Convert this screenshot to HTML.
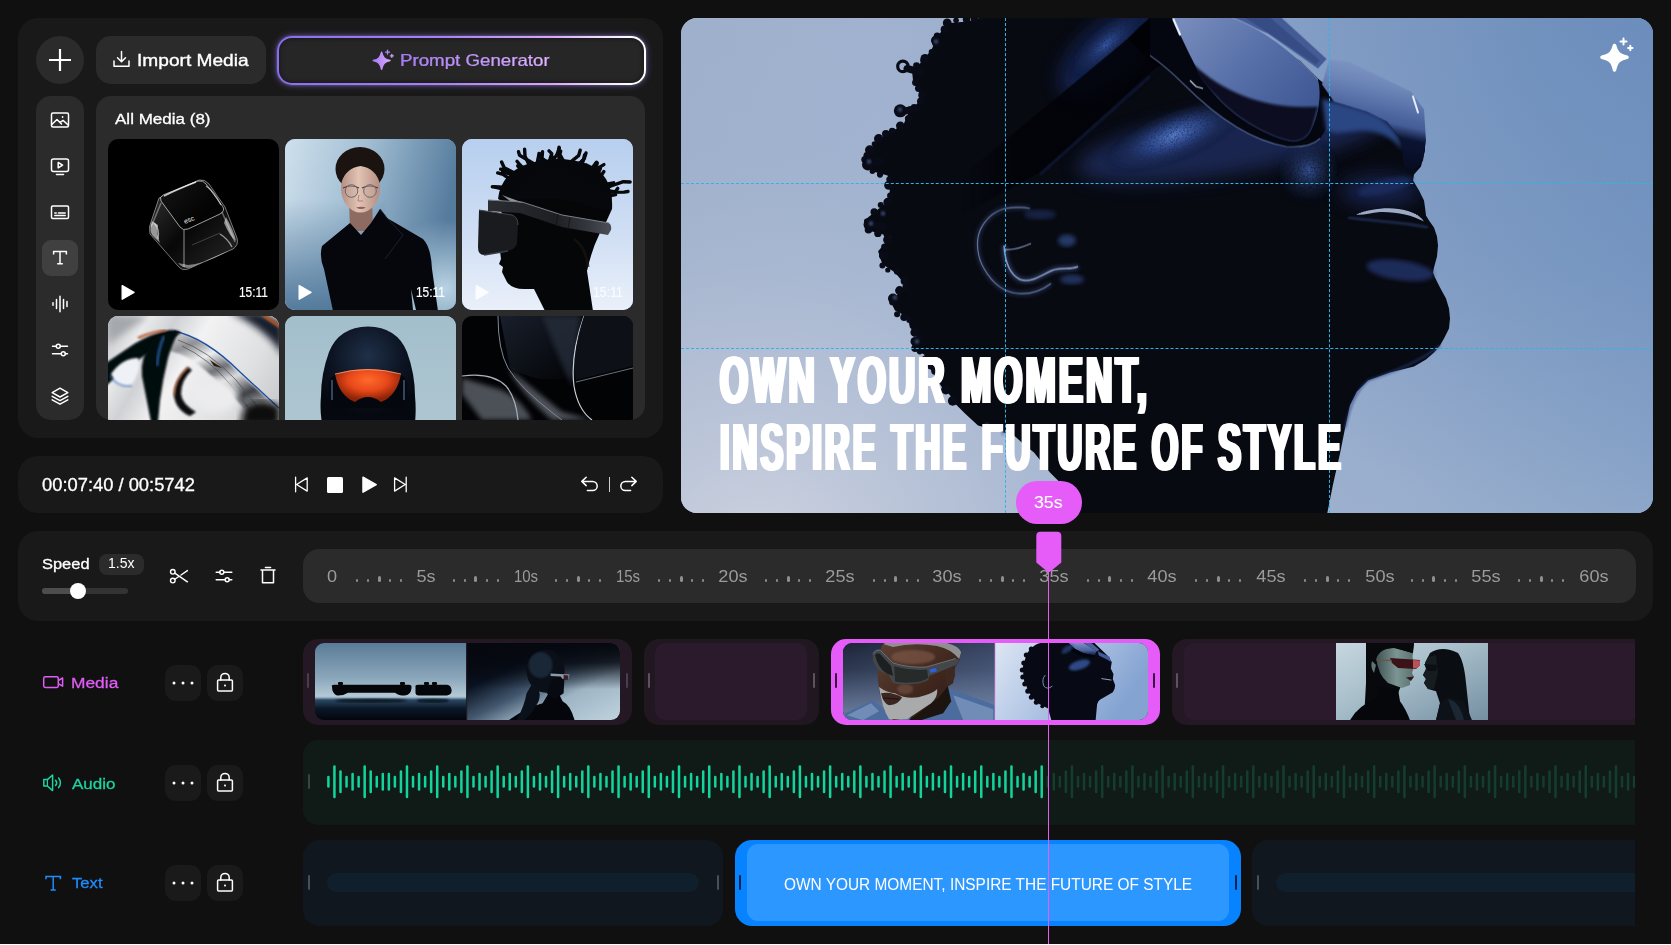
<!DOCTYPE html>
<html lang="en">
<head>
<meta charset="utf-8">
<title>Video Editor</title>
<style>
*{box-sizing:border-box;margin:0;padding:0}
html,body{width:1671px;height:945px;overflow:hidden;background:#101010}
body{font-family:"Liberation Sans",sans-serif;color:#fff;position:relative}
.abs{position:absolute}
.panel{position:absolute;background:#191919;border-radius:20px}
.box{position:absolute;background:#2b2b2b}
.t{position:absolute;white-space:nowrap;transform-origin:0 50%;line-height:1}
svg{position:absolute;overflow:visible}
.ico{fill:none;stroke:#fff;stroke-width:1.5;stroke-linecap:round;stroke-linejoin:round}
.thumb{position:absolute;border-radius:10px;overflow:hidden;width:171px;height:171px}
.thumb svg{left:0;top:0}
.tbtn{position:absolute;width:36px;height:36px;border-radius:11px;background:#1a1a1a}
.hdl{position:absolute;width:2px;height:15px;border-radius:1px}
</style>
</head>
<body>
<!-- LEFT MEDIA PANEL -->
<div class="panel" style="left:18px;top:18px;width:645px;height:420px"></div>
<div class="box" style="left:36px;top:36px;width:48px;height:48px;border-radius:24px"></div>
<svg style="left:36px;top:36px" width="48" height="48"><path class="ico" style="stroke-width:2.2;stroke-linecap:butt" d="M13 24H35M24 13V35"/></svg>
<div class="box" style="left:96px;top:36px;width:169.5px;height:48px;border-radius:15px"></div>
<svg style="left:112px;top:50px" width="20" height="20"><path class="ico" d="M9.5 1.5V11.5M5.5 7.8L9.5 11.8L13.5 7.8M2 11V16.2H17V11"/></svg>
<div class="t" id="tImport" style="left:137.1px;top:52.0px;font-size:16.5px;font-weight:400;-webkit-text-stroke:0.35px #fff;transform:scaleX(1.159)">Import Media</div>

<!-- prompt generator -->
<div class="abs" style="left:277px;top:35.5px;width:368.5px;height:49px;border-radius:15px;background:linear-gradient(90deg,#8a6df2 0%,#a882f5 45%,#d8a8f7 75%,#ffffff 96%);box-shadow:0 0 7px rgba(150,120,240,.55), 0 0 3px rgba(255,255,255,.25)"></div>
<div class="abs" style="left:279px;top:37.5px;width:364.5px;height:45px;border-radius:13px;background:#262626;box-shadow:inset 0 0 5px rgba(0,0,0,.5)"></div>
<svg style="left:372px;top:48px" width="24" height="24" viewBox="0 0 24 24">
<defs><linearGradient id="pg" x1="0" x2="1"><stop offset="0" stop-color="#a67cf7"/><stop offset="1" stop-color="#d9a7fb"/></linearGradient></defs>
<path fill="url(#pg)" d="M9.6 4.200000C10.8 9.4 12.6 11.4 18 12.5C12.6 13.800000 10.8 15.800000 9.6 21.400000C8.4 15.800000 6.6 13.800000 1.2 12.5C6.6 11.400000 8.4 9.400000 9.600000 4.200000Z" stroke="url(#pg)" stroke-width="1.4" stroke-linejoin="round"/>
<path stroke="url(#pg)" stroke-width="1.3" stroke-linecap="round" d="M15.5 2.2V6.2M13.5 4.2H17.500001M19.8 6.3V9.3M18.3 7.8H21.300001"/>
</svg>
<div class="t" id="tPrompt" style="left:399.5px;top:52.0px;font-size:16.5px;background:linear-gradient(90deg,#a57bf6,#c99cf8 60%,#e3b8fa);-webkit-background-clip:text;background-clip:text;color:transparent;-webkit-text-stroke:0.2px #b78cf7;transform:scaleX(1.133)">Prompt Generator</div>

<!-- sidebar -->
<div class="box" style="left:36px;top:96px;width:48px;height:324px;border-radius:15px"></div>
<div class="abs" style="left:42px;top:240px;width:36px;height:36px;border-radius:9px;background:#404040"></div>
<!-- image icon -->
<svg style="left:50px;top:110px" width="20" height="20"><rect class="ico" x="1.5" y="3" width="17" height="14" rx="1.5"/><path class="ico" d="M1.8 14.5L7 9.5L11.5 14M10 12.6L13 10.4L18.2 15"/><circle cx="12.6" cy="7" r="0.9" fill="#fff"/></svg>
<!-- video icon -->
<svg style="left:50px;top:156px" width="20" height="20"><rect class="ico" x="1.5" y="3" width="17" height="12.5" rx="2"/><path class="ico" d="M8.2 6.5L12.6 9.2L8.2 11.9Z"/><path class="ico" d="M6.5 18.6H13.5"/></svg>
<!-- subtitles icon -->
<svg style="left:50px;top:202px" width="20" height="20"><rect class="ico" x="1.5" y="4" width="17" height="12.5" rx="1.2"/><path class="ico" d="M4.8 11H6.2M8.4 11H15.2M4.8 13.6H15.2"/></svg>
<!-- T icon -->
<svg style="left:50px;top:248px" width="20" height="20"><path class="ico" style="stroke-linecap:butt" d="M3.6 6.4V3.6H16.4V6.4M10 3.6V15.8M7.2 15.8H12.8"/></svg>
<!-- waveform icon -->
<svg style="left:50px;top:294px" width="20" height="20"><path class="ico" d="M3 8.8V11.2M6.5 5.5V14.5M10 2.2V17.8M13.5 5.5V14.5M17 7.6V12.4"/></svg>
<!-- sliders icon -->
<svg style="left:50px;top:340px" width="20" height="20"><path class="ico" d="M2.5 6.3H6.3M10.3 6.3H17.5M2.5 13.7H11.3M15.3 13.7H17.5"/><circle class="ico" cx="8.3" cy="6.3" r="2"/><circle class="ico" cx="13.3" cy="13.7" r="2"/></svg>
<!-- layers icon -->
<svg style="left:50px;top:386px" width="20" height="20"><path class="ico" d="M10 2.2L17.8 6.6L10 11L2.2 6.6Z"/><path class="ico" d="M2.2 10.3L10 14.7L17.8 10.3M2.2 13.8L10 18.2L17.8 13.8"/></svg>

<!-- media list -->
<div class="box" style="left:96px;top:96px;width:549px;height:324px;border-radius:15px"></div>
<div class="t" id="tAll" style="left:115.2px;top:111.3px;font-size:15.5px;-webkit-text-stroke:0.3px #fff;transform:scaleX(1.098)">All Media (8)</div>
<div class="abs" id="mediaClip" style="left:96px;top:96px;width:549px;height:324px;overflow:hidden;border-radius:15px">
<!--TH_S--><!-- thumb 1 : glass keycap -->
<div class="thumb" style="left:12px;top:43.4px;background:#000">
<svg width="171" height="171" viewBox="0 0 171 171">
<defs><linearGradient id="kc1" x1="0" y1="0" x2="1" y2="1"><stop offset="0" stop-color="#fff" stop-opacity=".22"/><stop offset=".5" stop-color="#fff" stop-opacity=".03"/><stop offset="1" stop-color="#fff" stop-opacity=".16"/></linearGradient></defs>
<path d="M51,59 L91,41 Q97,40 101,45 L117,68 L129,99 Q131,106 125,110 L80,130 Q74,132 70,127 L42,95 Q40,88 44,80Z" fill="url(#kc1)" stroke="#fff" stroke-opacity=".45" stroke-width="1"/>
<path d="M53,62 Q51,58 55,56 L90,42 Q95,41 98,45 L115,68 Q117,72 112,75 L80,90 Q75,92 72,88Z" fill="#000" fill-opacity=".55" stroke="#fff" stroke-opacity=".6" stroke-width="1"/>
<path d="M76,91 L76,128 M114,73 L127,103 M53,64 L43,88" stroke="#fff" stroke-opacity=".35" stroke-width="1.6" fill="none"/>
<path d="M46,84 Q52,90 50,100 M112,95 Q120,100 124,108 M98,47 Q106,52 113,66" stroke="#fff" stroke-opacity=".55" stroke-width="1.4" fill="none"/>
<path d="M84,106 L112,94" stroke="#fff" stroke-opacity=".2" stroke-width="1"/>
<path d="M44,82 Q41,90 44,96 L52,104 Q48,94 50,86Z" fill="#fff" fill-opacity=".55"/>
<path d="M118,78 Q126,92 128,102 Q122,98 116,84Z" fill="#fff" fill-opacity=".5"/>
<path d="M70,124 Q76,131 84,128 L120,112 Q100,124 80,126Z" fill="#fff" fill-opacity=".45"/>
<path d="M56,57 Q70,50 88,43" stroke="#fff" stroke-opacity=".7" stroke-width="1.6" fill="none"/>
<text x="77" y="85" font-family="Liberation Sans, sans-serif" font-size="7" fill="#fff" fill-opacity=".9" transform="rotate(-22 77 85)">esc</text>
</svg></div>
<!-- thumb 2 : woman -->
<div class="thumb" style="left:189px;top:43.4px;background:#8fb0c8">
<svg width="171" height="171" viewBox="0 0 171 171">
<defs>
<linearGradient id="w1" x1="0" y1="0" x2="1" y2="0.25"><stop offset="0" stop-color="#cfe0ec"/><stop offset=".45" stop-color="#a3bfd4"/><stop offset="1" stop-color="#557b9d"/></linearGradient>
<linearGradient id="w2" x1="0" y1="0" x2="0" y2="1"><stop offset=".35" stop-color="#4f7699" stop-opacity="0"/><stop offset="1" stop-color="#4f7699" stop-opacity=".95"/></linearGradient>
<radialGradient id="w3" cx="160" cy="150" r="70" gradientUnits="userSpaceOnUse"><stop offset="0" stop-color="#b9d3e3"/><stop offset="1" stop-color="#b9d3e3" stop-opacity="0"/></radialGradient>
<linearGradient id="skin" x1="0" y1="0" x2="1" y2="0"><stop offset="0" stop-color="#b48f82"/><stop offset=".45" stop-color="#e2c3b4"/><stop offset="1" stop-color="#b58f80"/></linearGradient>
</defs>
<rect width="171" height="171" fill="url(#w1)"/><rect width="100" height="171" fill="url(#w2)"/><rect width="171" height="171" fill="url(#w3)"/>
<ellipse cx="75" cy="30" rx="24.5" ry="22" fill="#1a1310"/>
<path d="M64,60 L65,92 L88,92 L87,60Z" fill="#8d6b61"/>
<ellipse cx="75.500000" cy="49" rx="19.5" ry="24.5" fill="url(#skin)"/>
<path d="M56,44 Q56,22 75,16 Q95,22 95,44 Q90,29 75.500000,27 Q61,29 56,44Z" fill="#1a1310"/>
<path d="M58,49 Q66,45 74,49 M77,49 Q85,45 93,49" stroke="#4a3a38" stroke-width="1.2" fill="none"/>
<circle cx="66.5" cy="52" r="6.300000" fill="#cbb2aa" fill-opacity=".35" stroke="#6c6670" stroke-width="1"/><circle cx="85" cy="52" r="6.300000" fill="#cbb2aa" fill-opacity=".35" stroke="#6c6670" stroke-width="1"/>
<path d="M71,68.500000 Q76,67 81,68.500000 Q76,71.500000 71,68.500000Z" fill="#9a5b58"/>
<path d="M74,56 L73,62 L78,62" stroke="#a9877a" stroke-width="1" fill="none"/>
<path d="M65,84 L37,107 Q34,118 39,130 L48,172 L153,172 L147,130 Q146,108 138,100 L102,79 L95,70 L86,84 L76,96Z" fill="#05070d"/>
<path d="M95,70 L102,79 L118,96 L100,120" stroke="#1b2330" stroke-width="1" fill="none"/>
<path d="M128,171 L126,150 L131,171Z" fill="#9fbdd0"/>
</svg></div>
<!-- thumb 3 : VR profile -->
<div class="thumb" style="left:366px;top:43.4px;background:#cfdef3">
<svg width="171" height="171" viewBox="0 0 171 171">
<defs><linearGradient id="v1" x1="0" y1="0" x2="0" y2="1"><stop offset="0" stop-color="#b7cfee"/><stop offset=".55" stop-color="#cfdef4"/><stop offset="1" stop-color="#eaf0fa"/></linearGradient>
<linearGradient id="v2" x1="0" y1="0" x2="1" y2="0"><stop offset="0" stop-color="#2b2d32"/><stop offset=".55" stop-color="#1d1f23"/><stop offset=".8" stop-color="#33363c"/><stop offset="1" stop-color="#4c4f56"/></linearGradient></defs>
<rect width="171" height="171" fill="url(#v1)"/>
<!-- hair -->
<path d="M36,60 Q38,38 60,27 Q92,14 126,25 Q152,36 150,70 L140,92 L60,72Z" fill="#07080b"/>
<g stroke="#07080b" stroke-width="3.4" stroke-linecap="round" stroke-linejoin="round" fill="none"><path d="M57.5,51.6 L38.2,49.4 L33.1,48.2"/><path d="M60.8,50.1 L37.3,48.0 L30.3,47.8"/><path d="M54.9,45.1 L41.1,35.3 L35.7,33.9"/><path d="M59.4,44.0 L44.6,31.5 L38.7,30.2"/><path d="M63.2,43.0 L59.7,31.5 L55.7,26.8"/><path d="M62.2,39.0 L42.2,28.7 L39.6,23.0"/><path d="M63.6,36.2 L47.0,34.7 L40.6,33.0"/><path d="M67.9,35.9 L58.1,26.0 L55.0,22.2"/><path d="M71.0,34.6 L63.0,17.1 L62.6,10.2"/><path d="M73.5,32.6 L76.1,19.7 L77.0,14.5"/><path d="M76.5,31.1 L79.5,18.1 L78.7,14.9"/><path d="M79.3,29.1 L57.6,16.2 L56.5,12.7"/><path d="M84.2,32.4 L89.8,14.6 L87.0,11.9"/><path d="M86.5,28.7 L95.0,15.4 L97.3,9.2"/><path d="M90.5,31.3 L91.7,21.0 L89.8,17.0"/><path d="M93.6,28.9 L80.0,19.4 L80.5,12.6"/><path d="M97.2,26.7 L96.8,13.6 L97.0,8.2"/><path d="M100.5,29.5 L116.6,16.7 L118.2,11.2"/><path d="M103.2,32.3 L119.2,23.5 L121.5,20.8"/><path d="M106.7,31.6 L97.8,15.4 L98.7,12.2"/><path d="M110.6,30.9 L122.3,19.6 L124.0,13.9"/><path d="M111.2,36.1 L120.9,28.6 L124.2,26.0"/><path d="M116.7,33.4 L121.4,21.1 L122.6,15.9"/><path d="M118.0,36.6 L133.9,29.6 L135.3,23.8"/><path d="M120.6,38.1 L136.4,33.5 L138.4,29.5"/><path d="M125.7,37.5 L131.3,27.4 L134.4,23.2"/><path d="M129.3,38.7 L136.8,28.6 L141.9,25.6"/><path d="M126.6,43.7 L138.3,37.7 L141.9,32.6"/><path d="M128.1,45.8 L145.6,44.9 L151.6,43.8"/><path d="M129.2,48.1 L146.7,47.9 L150.4,45.3"/><path d="M133.2,49.3 L153.1,52.9 L155.7,49.4"/><path d="M138.8,50.5 L161.4,42.7 L168.1,43.0"/><path d="M138.5,53.4 L161.9,53.1 L166.0,52.5"/><path d="M134.2,56.8 L147.7,56.8 L153.6,55.7"/></g>
<!-- head / face -->
<path d="M40,60 L38,112 L39,120 L37,125 L41,128 L40,133 L45,143 Q50,150 62,150 L72,150 L83,172 L131,172 L125,132 Q130,110 137,96 L147,72 L100,60Z" fill="#050608"/>
<path d="M112,100 Q124,108 126,128" stroke="#1a1410" stroke-width="3" fill="none" opacity=".7"/>
<!-- strap -->
<path d="M26,61 L60,63 L100,76 L147,84 Q150,86 149,91 L146,96 L100,88 L58,74 L26,72Z" fill="url(#v2)"/>
<path d="M40,56 L62,64 L48,62Z" fill="#8e949e"/>
<path d="M26,61 L60,63 L100,76 L147,84" stroke="#7b7f88" stroke-width="1" fill="none"/>
<path d="M96,75 L94,87 M108,78 L106,90" stroke="#15161a" stroke-width="1"/>
<!-- visor -->
<path d="M17,71 L50,76 Q56,78 56,86 L55,104 Q54,110 46,112 L22,116 Q16,116 16,108Z" fill="#1a1b1f"/>
<path d="M17,71 L50,76 Q56,78 56,86" stroke="#45474d" stroke-width="1" fill="none"/>
<path d="M22,116 L46,112" stroke="#3a3c42" stroke-width="1.5"/>
</svg></div>
<!-- row 2 thumb A : glass swirl -->
<div class="thumb" style="left:12px;top:220px;background:#e2e3e4">
<svg width="171" height="171" viewBox="0 0 171 171">
<defs><linearGradient id="g1" x1="0" y1="0" x2="1" y2=".6"><stop offset="0" stop-color="#b9bbbf"/><stop offset=".18" stop-color="#e9eaeb"/><stop offset=".3" stop-color="#cfd1d4"/><stop offset=".45" stop-color="#f2f2f3"/><stop offset=".75" stop-color="#dfe0e2"/><stop offset="1" stop-color="#c4c6c9"/></linearGradient>
<linearGradient id="g2" x1="0" y1="0" x2=".55" y2="1"><stop offset="0" stop-color="#e9e9ea"/><stop offset=".2" stop-color="#8d8f93"/><stop offset=".35" stop-color="#f0f0f1"/><stop offset=".5" stop-color="#6d7074"/><stop offset=".62" stop-color="#dcdcde"/><stop offset=".8" stop-color="#3c3f45"/><stop offset="1" stop-color="#cfd0d2"/></linearGradient>
<filter id="gb"><feGaussianBlur stdDeviation="1"/></filter><filter id="gb3"><feGaussianBlur stdDeviation="3.5"/></filter></defs>
<rect width="171" height="171" fill="url(#g1)"/>
<path d="M0,0 L40,0 L0,28Z" fill="#a4a7ab" filter="url(#gb3)"/>
<path d="M122,-4 L152,-4 L175,8 L175,40 Q160,14 122,-4Z" fill="#141c2b" filter="url(#gb3)"/>
<path d="M155,-1 L172,11" stroke="#c9571c" stroke-width="2.5" filter="url(#gb)"/>
<!-- streak band right of apex -->
<path d="M64,15 Q96,20 130,56 L172,94 L172,110 L150,108 Q110,62 84,44 Q70,36 58,34Z" fill="url(#g2)" filter="url(#gb)"/>
<path d="M66,15 Q98,22 132,56 L172,93" stroke="#1c4fa0" stroke-width="1.3" fill="none"/>
<path d="M70,24 Q100,34 128,64 L160,104 M74,30 Q100,42 122,68 L150,104" stroke="#4a4d52" stroke-width="1" fill="none" opacity=".7"/>
<!-- black arch: left arm -->
<path d="M-2,47 L26,28 Q46,16 62,14 Q70,13.500000 73,17 Q58,24 48,32 L30,44 Q12,56 -2,70Z" fill="#05070c" filter="url(#gb)"/>
<path d="M30,22 Q46,15 58,14.500000" stroke="#b4481a" stroke-width="2" fill="none" filter="url(#gb)"/>
<!-- vertical arm -->
<path d="M44,24 Q56,15 70,17 Q64,28 60,42 Q55,62 52,84 L50,106 L43,106 Q38,80 34,60 Q32,42 44,24Z" fill="#05070c" filter="url(#gb)"/>
<path d="M56,20 Q50,34 49,50" stroke="#2a64b8" stroke-width="2.5" fill="none" opacity=".8" filter="url(#gb)"/>
<!-- lens highlight between arms -->
<path d="M3,58 Q14,42 30,42 Q34,52 24,68 Q10,74 3,58Z" fill="#eef1f5" filter="url(#gb)"/>
<path d="M2,60 Q10,72 24,70" stroke="#3a6fc0" stroke-width="1.5" fill="none" opacity=".7" filter="url(#gb)"/>
<!-- inner swirl crescent -->
<path d="M80,51 Q66,64 66,80 Q68,94 82,100 L88,96 Q74,88 73,78 Q73,64 84,54Z" fill="#07090e" filter="url(#gb)"/>
<path d="M80,51 Q66,64 66,80" stroke="#b4481a" stroke-width="1.5" fill="none" opacity=".8" filter="url(#gb)"/>
<path d="M102,44 L114,52 L106,50Z" fill="#2a1a12"/>
<!-- bottom right dark blob -->
<path d="M136,92 Q150,80 172,90 L172,110 L132,110Z" fill="#07090e" filter="url(#gb3)"/>
<ellipse cx="108" cy="80" rx="22" ry="16" fill="#ececee" filter="url(#gb3)"/>
</svg></div>
<!-- row 2 thumb B : helmet -->
<div class="thumb" style="left:189px;top:220px;background:#a8c2ce">
<svg width="171" height="171" viewBox="0 0 171 171">
<defs><radialGradient id="h1" cx="83" cy="40" r="60" gradientUnits="userSpaceOnUse"><stop offset="0" stop-color="#1f3048"/><stop offset=".6" stop-color="#0c1422"/><stop offset="1" stop-color="#05080f"/></radialGradient>
<radialGradient id="h2" cx="83" cy="64" r="36" gradientUnits="userSpaceOnUse" gradientTransform="translate(83 64) scale(1 .55) translate(-83 -64)"><stop offset="0" stop-color="#ff6a2c"/><stop offset=".55" stop-color="#e8481a"/><stop offset="1" stop-color="#8e2308"/></radialGradient>
<linearGradient id="h0" x1="0" y1="0" x2="0" y2="1"><stop offset="0" stop-color="#a3bfcc"/><stop offset="1" stop-color="#b4cad4"/></linearGradient></defs>
<rect width="171" height="171" fill="url(#h0)"/>
<path d="M83,10.500000 Q112,11 122,36 Q130,58 130,80 Q132,100 128,120 L124,171 L42,171 L40,120 Q34,100 36,80 Q36,58 44,36 Q54,11 83,10.500000Z" fill="url(#h1)"/>
<path d="M44,70 Q44,58 56,58 L110,58 Q122,58 122,70 L122,84 Q122,92 112,92 L54,92 Q44,92 44,84Z" fill="#04070d"/>
<path d="M50,58 Q83,48 116,58 Q112,80 96,86 Q83,76 70,86 Q54,80 50,58Z" fill="url(#h2)"/>
<path d="M50,58 Q83,49 116,58" stroke="#ffb08a" stroke-width="1" fill="none" opacity=".7"/>
<path d="M47,64 L47,84 M119,64 L119,84" stroke="#5f7fa8" stroke-width="1.5" opacity=".7"/>
</svg></div>
<!-- row 2 thumb C : dark abstract -->
<div class="thumb" style="left:366px;top:220px;background:#020305">
<svg width="171" height="171" viewBox="0 0 171 171">
<defs><linearGradient id="d1" x1="0" y1="0" x2="1" y2="1"><stop offset="0" stop-color="#1b2230"/><stop offset="1" stop-color="#020305"/></linearGradient><filter id="db"><feGaussianBlur stdDeviation="2.5"/></filter></defs>
<path d="M38,0 L120,0 L112,60 Q80,70 48,52Z" fill="url(#d1)" opacity=".9"/>
<path d="M80,0 L118,0 L110,70 Q100,50 80,0Z" fill="#2a3140" opacity=".7" filter="url(#db)"/>
<path d="M0,62 L40,74 Q60,84 70,104 L20,104 L0,78Z" fill="#8a919c" opacity=".55" filter="url(#db)"/>
<path d="M46,52 Q70,72 100,96 L130,104 L90,104 Q60,78 46,52Z" fill="#9aa1ad" opacity=".5" filter="url(#db)"/>
<path d="M36,0 Q36,34 46,52 Q58,72 92,98 L100,104" stroke="#7f8794" stroke-width="1" fill="none"/>
<path d="M122,0 Q108,40 112,70 Q116,94 130,104" stroke="#c9ced6" stroke-width="1.2" fill="none"/>
<path d="M0,60 Q30,56 44,70 Q54,82 56,104" stroke="#aab0ba" stroke-width="1.2" fill="none"/>
<path d="M114,66 L171,52" stroke="#69707c" stroke-width="1" fill="none"/>
<path d="M122,0 L171,0 L171,50 L114,64 Q110,36 122,0Z" fill="#0d1017"/>
</svg></div>
<!-- overlays -->
<svg style="left:0;top:0" width="549" height="324"><g fill="#fff"><path d="M26.2 189.6L38 196.4L26.2 203.2Z" stroke="#fff" stroke-width="1.4" stroke-linejoin="round"/><path d="M203.2 189.6L215 196.4L203.2 203.2Z" stroke="#fff" stroke-width="1.4" stroke-linejoin="round"/><path d="M380.2 189.6L392 196.4L380.2 203.2Z" stroke="#fff" stroke-width="1.4" stroke-linejoin="round" opacity=".85"/></g></svg>
<div class="t tm" id="tTm1" style="left:143.0px;top:188.0px;transform:scaleX(0.772)">15:11</div>
<div class="t tm" id="tTm2" style="left:320.0px;top:188.0px;transform:scaleX(0.772)">15:11</div>
<div class="t tm" id="tTm3" style="left:497.0px;top:188.0px;opacity:.8;transform:scaleX(0.801)">15:11</div>
<style>.tm{font-size:15.4px;-webkit-text-stroke:0.2px #fff}</style>
<!--TH_E-->
</div>
<!-- PREVIEW -->
<div class="abs" id="preview" style="left:681px;top:17.5px;width:972px;height:495.5px;border-radius:16px;overflow:hidden;background:#8fa6c9">
<svg style="left:0;top:0" width="972" height="495.5" viewBox="681 17.5 972 495.5">
<defs>
<linearGradient id="skyH" x1="681" x2="1653" y1="0" y2="0" gradientUnits="userSpaceOnUse">
<stop offset="0" stop-color="#9fb0cc"/><stop offset="0.2" stop-color="#a0b2cf"/><stop offset="0.74" stop-color="#8fa6ca"/><stop offset="0.9" stop-color="#84a0c6"/><stop offset="1" stop-color="#7e9bc5"/></linearGradient>
<linearGradient id="skyV" x1="0" x2="0" y1="17" y2="513" gradientUnits="userSpaceOnUse">
<stop offset="0" stop-color="#c9d2dc" stop-opacity="0"/><stop offset="0.5" stop-color="#c9d2dc" stop-opacity="0.04"/><stop offset="1" stop-color="#c9d2dc" stop-opacity="0.2"/></linearGradient>
<radialGradient id="skyTR" cx="1600" cy="0" r="520" gradientUnits="userSpaceOnUse"><stop offset="0" stop-color="#5f84b6" stop-opacity="0.6"/><stop offset="0.5" stop-color="#5f84b6" stop-opacity="0.35"/><stop offset="1" stop-color="#5f84b6" stop-opacity="0"/></radialGradient>
<radialGradient id="skyBL" cx="760" cy="560" r="420" gradientUnits="userSpaceOnUse">
<stop offset="0" stop-color="#d2d6e2" stop-opacity="0.9"/><stop offset="0.5" stop-color="#c4cbdc" stop-opacity="0.45"/><stop offset="1" stop-color="#b0bdd6" stop-opacity="0"/></radialGradient>
<radialGradient id="cheek" cx="1176" cy="136" r="78" gradientUnits="userSpaceOnUse" gradientTransform="translate(1176 136) scale(1 0.36) translate(-1176 -136)"><stop offset="0" stop-color="#5a80d0" stop-opacity="0.95"/><stop offset="0.4" stop-color="#2f4c94" stop-opacity="0.75"/><stop offset="1" stop-color="#0a1024" stop-opacity="0"/></radialGradient>
<radialGradient id="cheek2" cx="1308" cy="170" r="36" gradientUnits="userSpaceOnUse"><stop offset="0" stop-color="#3a5aa4" stop-opacity="0.9"/><stop offset="1" stop-color="#0a1024" stop-opacity="0"/></radialGradient>
<radialGradient id="fore" cx="1106" cy="44" r="50" gradientUnits="userSpaceOnUse" gradientTransform="translate(1106 44) scale(1 0.4) translate(-1106 -44)"><stop offset="0" stop-color="#3a5cb0" stop-opacity="0.9"/><stop offset="1" stop-color="#0a1024" stop-opacity="0"/></radialGradient>
<linearGradient id="lens1" x1="1185" y1="20" x2="1300" y2="125" gradientUnits="userSpaceOnUse"><stop offset="0" stop-color="#768bbb"/><stop offset="0.5" stop-color="#566fa8"/><stop offset="1" stop-color="#3f5894"/></linearGradient>
<linearGradient id="lens2" x1="1380" y1="165" x2="1400" y2="70" gradientUnits="userSpaceOnUse">
<stop offset="0" stop-color="#070b1e"/><stop offset="0.32" stop-color="#0b1433"/><stop offset="0.45" stop-color="#445c98"/><stop offset="0.8" stop-color="#6d86b8"/><stop offset="1" stop-color="#7d95c2"/></linearGradient>
<filter id="skinTex" x="-10%" y="-10%" width="120%" height="120%"><feTurbulence type="fractalNoise" baseFrequency="0.55" numOctaves="2" seed="4" result="n"/><feColorMatrix in="n" type="matrix" values="0 0 0 0 1  0 0 0 0 1  0 0 0 0 1  0 0 0 1.5 0.15" result="a"/><feComposite in="SourceGraphic" in2="a" operator="in"/></filter>
<clipPath id="silClip"><path d="M983,17 L967,21 L950,22.5 L939.5,33 L931,50 L920,63 L912,70 L913,80 L922.6,98.7 L910,109 L903.5,124 L888.7,132.6 L876,141 L863.3,160 L871.8,170.7 L887.6,175 L889.8,189.7 L888.7,200 L876,210.6 L865.4,219 L866.5,229.6 L890.8,236 L878.1,250.8 L882.3,263.5 L895,272 L905.6,284.7 L890.8,301.6 L895,310 L907.7,316.4 L909.9,327 L918.3,335.5 L912,346 L924.7,354.5 L931,369.4 L941.6,386.3 L950,394.8 L956,404 L965,413 L978,425 L996,430 L1014,435 L1024,444 L1034,452 L1042,462 L1050,472 L1060,482 L1068,498 L1076,514 L1327,514 L1333,484 L1340,453 L1345,428 L1350,405 L1357,391 L1368,380 L1390,372 L1414,366 L1426,359 L1434,352 L1440,345 L1444,338 L1449,328 L1450,318 L1449,308 L1446,298 L1440,287 L1435,277 L1433,272 L1434,267 L1437,256 L1438,245 L1437,236 L1434,227 L1429,220 L1426,215 L1425,207 L1424,200 L1419,190 L1413,180 L1414,174 L1421,166 L1425,150 L1425,130 L1420,112 L1400,104 L1360,100 L1330,90 L1300,60 L1260,34 L1232,17Z"/></clipPath>
<linearGradient id="armG" x1="962" y1="0" x2="1150" y2="0" gradientUnits="userSpaceOnUse"><stop offset="0" stop-color="#020308" stop-opacity="0"/><stop offset=".3" stop-color="#020308" stop-opacity=".85"/><stop offset="1" stop-color="#020308" stop-opacity=".9"/></linearGradient>
<filter id="b8" x="-30%" y="-50%" width="160%" height="200%"><feGaussianBlur stdDeviation="9"/></filter>
<filter id="b2"><feGaussianBlur stdDeviation="2"/></filter>
<filter id="b1"><feGaussianBlur stdDeviation="0.8"/></filter>
</defs>
<rect x="681" y="17" width="972" height="497" fill="url(#skyH)"/>
<rect x="681" y="17" width="972" height="497" fill="url(#skyV)"/>
<rect x="681" y="17" width="500" height="497" fill="url(#skyBL)"/>
<rect x="1080" y="17" width="573" height="497" fill="url(#skyTR)"/>
<!--SIL_START-->
<path d="M983,17 L967,21 L950,22.5 L939.5,33 L931,50 L920,63 L912,70 L913,80 L922.6,98.7 L910,109 L903.5,124 L888.7,132.6 L876,141 L863.3,160 L871.8,170.7 L887.6,175 L889.8,189.7 L888.7,200 L876,210.6 L865.4,219 L866.5,229.6 L890.8,236 L878.1,250.8 L882.3,263.5 L895,272 L905.6,284.7 L890.8,301.6 L895,310 L907.7,316.4 L909.9,327 L918.3,335.5 L912,346 L924.7,354.5 L931,369.4 L941.6,386.3 L950,394.8 L956,404 L965,413 L978,425 L996,430 L1014,435 L1024,444 L1034,452 L1042,462 L1050,472 L1060,482 L1068,498 L1076,514 L1327,514 L1333,484 L1340,453 L1345,428 L1350,405 L1357,391 L1368,380 L1390,372 L1414,366 L1426,359 L1434,352 L1440,345 L1444,338 L1449,328 L1450,318 L1449,308 L1446,298 L1440,287 L1435,277 L1433,272 L1434,267 L1437,256 L1438,245 L1437,236 L1434,227 L1429,220 L1426,215 L1425,207 L1424,200 L1419,190 L1413,180 L1414,174 L1421,166 L1425,150 L1425,130 L1420,112 L1400,104 L1360,100 L1330,90 L1300,60 L1260,34 L1232,17Z" fill="#080a12"/>
<circle cx="981.4" cy="17.2" r="2.9" fill="#090c16"/>
<circle cx="974.4" cy="17.9" r="3.8" fill="#090c16"/>
<circle cx="966.5" cy="18.7" r="3.7" fill="#090c16"/>
<circle cx="956.1" cy="19.8" r="2.8" fill="#090c16"/>
<circle cx="947.2" cy="22.4" r="4.4" fill="#090c16"/>
<circle cx="944.6" cy="29.0" r="4.0" fill="#090c16"/>
<circle cx="937.2" cy="35.5" r="3.5" fill="#090c16"/>
<circle cx="936.5" cy="42.4" r="4.5" fill="#090c16"/>
<circle cx="931.6" cy="51.5" r="2.9" fill="#090c16"/>
<circle cx="923.2" cy="60.0" r="3.0" fill="#090c16"/>
<circle cx="916.5" cy="65.2" r="3.4" fill="#090c16"/>
<circle cx="913.8" cy="70.2" r="2.7" fill="#090c16"/>
<circle cx="915.6" cy="81.9" r="3.5" fill="#090c16"/>
<circle cx="918.6" cy="87.8" r="3.6" fill="#090c16"/>
<circle cx="922.4" cy="94.7" r="4.1" fill="#090c16"/>
<circle cx="920.8" cy="100.9" r="3.8" fill="#090c16"/>
<circle cx="914.1" cy="106.8" r="3.2" fill="#090c16"/>
<circle cx="909.6" cy="109.5" r="3.5" fill="#090c16"/>
<circle cx="908.6" cy="118.1" r="3.7" fill="#090c16"/>
<circle cx="900.3" cy="125.3" r="4.3" fill="#090c16"/>
<circle cx="892.2" cy="130.5" r="3.3" fill="#090c16"/>
<circle cx="885.9" cy="133.3" r="3.9" fill="#090c16"/>
<circle cx="878.7" cy="138.2" r="4.7" fill="#090c16"/>
<circle cx="874.4" cy="143.5" r="2.7" fill="#090c16"/>
<circle cx="869.8" cy="149.6" r="4.8" fill="#090c16"/>
<circle cx="866.9" cy="154.8" r="3.4" fill="#090c16"/>
<circle cx="864.9" cy="159.0" r="3.6" fill="#090c16"/>
<circle cx="872.4" cy="170.7" r="2.7" fill="#090c16"/>
<circle cx="880.0" cy="174.1" r="3.1" fill="#090c16"/>
<circle cx="889.1" cy="178.7" r="2.8" fill="#090c16"/>
<circle cx="888.7" cy="184.8" r="4.5" fill="#090c16"/>
<circle cx="890.3" cy="195.2" r="3.2" fill="#090c16"/>
<circle cx="887.9" cy="201.8" r="4.5" fill="#090c16"/>
<circle cx="880.7" cy="204.5" r="3.0" fill="#090c16"/>
<circle cx="874.2" cy="211.4" r="3.7" fill="#090c16"/>
<circle cx="866.6" cy="220.6" r="2.6" fill="#090c16"/>
<circle cx="868.5" cy="229.3" r="3.8" fill="#090c16"/>
<circle cx="877.9" cy="232.9" r="3.7" fill="#090c16"/>
<circle cx="886.2" cy="234.1" r="2.7" fill="#090c16"/>
<circle cx="887.6" cy="239.3" r="4.5" fill="#090c16"/>
<circle cx="884.6" cy="246.5" r="3.5" fill="#090c16"/>
<circle cx="881.8" cy="254.9" r="2.7" fill="#090c16"/>
<circle cx="882.4" cy="265.1" r="3.0" fill="#090c16"/>
<circle cx="887.8" cy="269.5" r="2.6" fill="#090c16"/>
<circle cx="897.2" cy="270.8" r="3.4" fill="#090c16"/>
<circle cx="904.6" cy="280.4" r="4.0" fill="#090c16"/>
<circle cx="905.8" cy="286.4" r="3.4" fill="#090c16"/>
<circle cx="899.6" cy="290.1" r="4.5" fill="#090c16"/>
<circle cx="896.0" cy="299.0" r="3.7" fill="#090c16"/>
<circle cx="892.5" cy="301.4" r="3.4" fill="#090c16"/>
<circle cx="897.1" cy="313.8" r="3.0" fill="#090c16"/>
<circle cx="904.1" cy="316.8" r="3.8" fill="#090c16"/>
<circle cx="909.1" cy="319.7" r="2.7" fill="#090c16"/>
<circle cx="914.9" cy="331.9" r="4.5" fill="#090c16"/>
<circle cx="919.0" cy="338.1" r="3.4" fill="#090c16"/>
<circle cx="915.1" cy="347.8" r="3.8" fill="#090c16"/>
<circle cx="919.8" cy="350.8" r="3.1" fill="#090c16"/>
<circle cx="926.3" cy="359.0" r="4.5" fill="#090c16"/>
<circle cx="931.0" cy="364.9" r="4.2" fill="#090c16"/>
<circle cx="934.7" cy="370.7" r="3.4" fill="#090c16"/>
<circle cx="937.7" cy="377.1" r="3.2" fill="#090c16"/>
<circle cx="945.8" cy="389.2" r="4.7" fill="#090c16"/>
<circle cx="952.7" cy="400.4" r="4.8" fill="#090c16"/>
<circle cx="900.3" cy="110.3" r="6.5" fill="#090c16"/>
<circle cx="868" cy="164" r="6" fill="#090c16"/>
<circle cx="870" cy="224" r="6.5" fill="#090c16"/>
<circle cx="893" cy="298" r="5" fill="#090c16"/>
<circle cx="884" cy="255" r="5" fill="#090c16"/>
<circle cx="915" cy="341" r="4.5" fill="#090c16"/>
<circle cx="936" cy="40" r="5" fill="#090c16"/>
<circle cx="925" cy="58" r="4.5" fill="#090c16"/>
<circle cx="902.9" cy="65.9" r="5.2" fill="none" stroke="#090c16" stroke-width="3.2"/>
<path d="M907,68 L922,72 M903,111 L916,108 M868,164 L880,160 M870,224 L884,226" stroke="#090c16" stroke-width="7" stroke-linecap="round"/>
<circle cx="900" cy="109" r="2.2" fill="#5c76b8" opacity="0.55" filter="url(#b1)"/>
<circle cx="869" cy="161" r="2.2" fill="#5c76b8" opacity="0.55" filter="url(#b1)"/>
<circle cx="871" cy="223" r="2.2" fill="#5c76b8" opacity="0.55" filter="url(#b1)"/>
<circle cx="917" cy="341" r="2.2" fill="#5c76b8" opacity="0.55" filter="url(#b1)"/>
<circle cx="987" cy="425" r="2.2" fill="#5c76b8" opacity="0.55" filter="url(#b1)"/>
<circle cx="1003" cy="433" r="2.2" fill="#5c76b8" opacity="0.55" filter="url(#b1)"/>
<circle cx="936" cy="41" r="2.2" fill="#5c76b8" opacity="0.55" filter="url(#b1)"/>
<circle cx="895" cy="297" r="2.2" fill="#5c76b8" opacity="0.55" filter="url(#b1)"/>
<circle cx="883" cy="213" r="2.2" fill="#5c76b8" opacity="0.55" filter="url(#b1)"/>
<g clip-path="url(#silClip)"><!-- broad washes -->
<ellipse cx="1235" cy="140" rx="160" ry="32" fill="#1a2b5a" opacity=".85" filter="url(#b8)" transform="rotate(-10 1235 140)"/>
<ellipse cx="1110" cy="52" rx="62" ry="30" fill="#16285a" opacity=".8" filter="url(#b8)" transform="rotate(-40 1110 52)"/>
<ellipse cx="1380" cy="190" rx="40" ry="16" fill="#1a2c5e" opacity=".7" filter="url(#b8)"/>
<!-- face highlights -->
<g filter="url(#skinTex)">
<ellipse cx="1172" cy="140" rx="78" ry="27" fill="url(#cheek)" transform="rotate(-22 1172 140)"/>
<ellipse cx="1308" cy="172" rx="30" ry="36" fill="url(#cheek2)" transform="rotate(20 1308 172)"/>
<ellipse cx="1106" cy="44" rx="50" ry="20" fill="url(#fore)" transform="rotate(-42 1106 44)"/>
</g>
</g>
<!-- temple arm -->
<path d="M1172,17 L1150,17 L1128,38 L1005,140 L962,176 L962,214 L1040,172 L1150,72 L1180,50Z" fill="url(#armG)"/>
<path d="M1128,38 L1140,26 L1150,17 L1176,17 L1188,46 L1160,66 L1150,60Z" fill="#010206"/>
<path d="M1040,174 L1150,76" stroke="#1b2c5c" stroke-width="2" opacity="0.6" filter="url(#b1)"/>
<!-- far arm / top band -->
<path d="M1229,17 L1282,17 L1327,58 L1318,68 L1268,33Z" fill="#435c96"/>
<path d="M1245,17 L1270,17 L1320,60 L1316,64Z" fill="#34497f" opacity=".8"/>
<path d="M1282,17 L1327,58" stroke="#8aa0cc" stroke-width="1.2" opacity="0.8"/>
<!-- frame dark under lens1 -->
<path d="M1150,17 L1172,17 C1190,55 1200,78 1216,96 C1234,116 1262,134 1290,141 C1300,142 1308,138 1312,128 C1318,115 1322,95 1318,79 L1330,86 C1336,100 1330,126 1320,138 C1312,146 1300,147 1286,146 C1250,140 1214,114 1184,84 C1170,70 1160,62 1150,55Z" fill="#040610"/>
<path d="M1150,55 C1160,62 1170,70 1184,84 C1214,114 1250,140 1286,146 C1300,147 1312,146 1320,138" fill="none" stroke="#5b719f" stroke-width="1.1" opacity="0.8"/>
<!-- lens 1 -->
<path d="M1172,17 L1232,17 C1262,28 1292,50 1318,79 C1322,95 1318,115 1312,128 C1308,138 1300,142 1290,141 C1262,134 1234,116 1216,96 C1200,78 1190,55 1172,17 Z" fill="url(#lens1)"/>
<path d="M1194,64 C1222,92 1268,110 1318,106 L1312,128 C1308,138 1300,142 1290,141 C1262,134 1234,116 1216,96 C1210,90 1204,84 1199,76Z" fill="#080d22" filter="url(#b1)"/>
<path d="M1232,17 C1262,28 1292,50 1318,79" fill="none" stroke="#a3b5da" stroke-width="1" opacity="0.7"/>
<path d="M1173.500000,19 L1180,34" stroke="#e8eefb" stroke-width="2.2" stroke-linecap="round"/>
<path d="M1190,80 L1196,86 L1203,88" fill="none" stroke="#c8d2ea" stroke-width="1.3"/>
<!-- nose under bridge -->
<path d="M1322,98 C1340,104 1362,108 1378,116 C1392,124 1400,136 1402,150 C1396,140 1384,132 1366,130 C1348,130 1334,136 1326,128Z" fill="#2b4684" opacity="1" filter="url(#b2)"/>
<!-- lens 2 -->
<path d="M1329,59 L1348,61 L1411,91 L1424,109 L1426,140 L1423,160 L1413,172 L1404,166 L1401,138 L1387,121 L1367,111 L1334,101 L1322,84Z" fill="url(#lens2)"/>
<path d="M1413,96 L1418,112" stroke="#e8eefb" stroke-width="2" stroke-linecap="round"/>
<!-- ear -->
<path d="M1004,245 C1005,262 1010,274 1020,279 C1032,283 1042,274 1052,270 C1062,266 1070,270 1078,266" fill="none" stroke="#5b7bc0" stroke-width="4" opacity="0.5" filter="url(#b2)"/>
<path d="M1030,208 C1020,206 1012,207 1005,208 C994,211 985,219 980,230 C975,242 978,258 984,268 C992,282 1004,292 1018,293 C1030,294 1042,290 1051,283" fill="none" stroke="#4c68a8" stroke-width="3.5" opacity="0.4" filter="url(#b2)"/>
<path d="M1030,208 C1020,206 1012,207 1005,208 C994,211 985,219 980,230 C975,242 978,258 984,268 C992,282 1004,292 1018,293 C1030,294 1042,290 1051,283" fill="none" stroke="#7d93c0" stroke-width="1.2" opacity="0.75"/>
<path d="M1004,245 C1005,262 1010,274 1020,279 C1032,283 1042,274 1052,270 C1062,266 1070,270 1078,266" fill="none" stroke="#9bb0d8" stroke-width="1.5" opacity="0.85"/>
<path d="M1005,249 C1014,250 1022,247 1031,243" fill="none" stroke="#9bb0d8" stroke-width="1.3" opacity="0.8"/>
<ellipse cx="1067" cy="240" rx="9" ry="6" fill="#3a5aa6" opacity=".6" filter="url(#b2)"/>
<ellipse cx="1072" cy="279" rx="12" ry="5" fill="#3a5aa6" opacity=".5" filter="url(#b2)"/>
<ellipse cx="1040" cy="214" rx="16" ry="5" fill="#2a4383" opacity=".45" filter="url(#b2)"/>
<!-- lips -->
<path d="M1356,214 C1370,208 1392,205.500000 1408,210.500000 C1416,213 1421,216 1424,221 C1412,214.500000 1396,211 1380,211.500000 C1370,212.500000 1362,215 1356,214Z" fill="#b9c7e2" opacity=".85"/>
<path d="M1356,214 C1370,207 1392,204 1408,210 C1416,213 1421,216 1424,221" fill="none" stroke="#0a0d16" stroke-width="1.2" stroke-dasharray="0.8 1.6" opacity=".7"/>
<path d="M1348,217 C1375,221 1400,221 1428,227" fill="none" stroke="#3b5596" stroke-width="1.5" opacity="0.8" filter="url(#b1)"/>
<ellipse cx="1400" cy="270" rx="34" ry="10" fill="#263b78" opacity="0.7" filter="url(#b2)" transform="rotate(8 1402 271)"/>
<ellipse cx="1385" cy="186" rx="28" ry="7" fill="#1d2f62" opacity="0.8" filter="url(#b2)" transform="rotate(-14 1385 186)"/>
<!-- jaw rim -->
<path d="M1440,345 C1420,362 1390,372 1368,380 C1356,390 1350,405 1345,428" fill="none" stroke="#2a4282" stroke-width="2" opacity="0.7" filter="url(#b1)"/>
<!--SIL_END-->
</svg>
<!-- guides -->
<div class="abs" style="left:323.5px;top:0;width:0;height:100%;border-left:1px dashed #2fb4ea"></div>
<div class="abs" style="left:647.5px;top:0;width:0;height:100%;border-left:1px dashed #2fb4ea"></div>
<div class="abs" style="left:0;top:165px;width:100%;height:0;border-top:1px dashed #2fb4ea"></div>
<div class="abs" style="left:0;top:330px;width:100%;height:0;border-top:1px dashed #2fb4ea"></div>
<!-- headline -->
<div class="t hl" id="tH1" style="left:38.7px;top:329px">OWN YOUR MOMENT,</div>
<div class="t hl" id="tH2" style="left:38.5px;top:396px;transform:scaleX(0.5185)">INSPIRE THE FUTURE OF STYLE</div>
<!-- sparkle -->
<svg style="left:917px;top:18px" width="40" height="40" viewBox="0 0 40 40">
<path fill="#fff" stroke="#fff" stroke-width="3.6" stroke-linejoin="round" d="M16.5 9.500000C18.2 16.600000 20.600000 19.300000 29 21.200000C20.600000 23.200000 18.200000 26 16.500000 34C14.8 26 12.400000 23.200000 4 21.200000C12.400000 19.300000 14.800000 16.600000 16.500000 9.500000Z"/>
<path stroke="#fff" stroke-width="2" stroke-linecap="round" d="M25.5 2.6V8.6M22.5 5.6H28.5M32.3 9.8V14.2M30.1 12H34.5"/>
</svg>
</div>
<style>
.hl{font-weight:700;font-size:66px;letter-spacing:6px;text-shadow:1.75px 0 #fff,-1.75px 0 #fff,3.5px 0 #fff,-3.5px 0 #fff;transform:scaleX(0.546)}
</style>
<!-- PLAYBACK BAR -->
<div class="panel" style="left:18px;top:456px;width:645px;height:57px"></div>
<div class="t" id="tTime" style="left:42.1px;top:475.6px;font-size:18.4px;-webkit-text-stroke:0.3px #fff;transform:scaleX(0.997)">00:07:40 / 00:5742</div>
<!-- prev -->
<svg style="left:292px;top:474px" width="20" height="20"><path class="ico" style="stroke-width:1.3" d="M3.600000 3.200000V17.800000M15.2 3.900000V17.100000L4.6 10.5Z"/></svg>
<!-- stop -->
<div class="abs" style="left:326.5px;top:476.5px;width:16px;height:16px;background:#fff;border-radius:1.5px"></div>
<!-- play -->
<svg style="left:360px;top:474px" width="20" height="22"><path fill="#fff" stroke="#fff" stroke-width="1.5" stroke-linejoin="round" d="M3 3.2L16.2 10.7L3 18.2Z"/></svg>
<!-- next -->
<svg style="left:390px;top:474px" width="20" height="20"><path class="ico" style="stroke-width:1.3" d="M16.200000 3.200000V17.800000M4.6 3.900000V17.100000L15.2 10.5Z"/></svg>
<!-- undo / redo -->
<svg style="left:579px;top:474px" width="22" height="20"><path class="ico" d="M7.2 3.2L2.8 7.4L7.2 11.6M3 7.4H13.6A4.6 4.6 0 0 1 13.6 16.6H8.4"/></svg>
<div class="abs" style="left:609px;top:477px;width:1.2px;height:15px;background:#cfcfcf"></div>
<svg style="left:617px;top:474px" width="22" height="20"><path class="ico" d="M14.8 3.2L19.2 7.4L14.8 11.6M19 7.4H8.4A4.6 4.6 0 0 0 8.4 16.6H13.6"/></svg>
<!-- TIMELINE TOOLBAR -->
<div class="panel" style="left:18px;top:531px;width:1635px;height:90px"></div>
<div class="t" id="tSpeed" style="left:42.1px;top:556.0px;font-size:15.5px;-webkit-text-stroke:0.3px #fff;transform:scaleX(1.061)">Speed</div>
<div class="box" style="left:99px;top:553.5px;width:45px;height:21px;border-radius:8px"></div>
<div class="t" id="tX" style="left:107.6px;top:555.3px;font-size:15px;transform:scaleX(0.933)">1.5x</div>
<div class="abs" style="left:42px;top:588px;width:86px;height:6px;border-radius:3px;background:#333"></div>
<div class="abs" style="left:42px;top:588px;width:38px;height:6px;border-radius:3px;background:#4d4d4d"></div>
<div class="abs" style="left:70px;top:583px;width:16px;height:16px;border-radius:8px;background:#fff"></div>
<!-- scissors -->
<svg style="left:168px;top:566px" width="22" height="20"><circle class="ico" style="stroke-width:1.4" cx="4.800000" cy="5.800000" r="2.300000"/><circle class="ico" style="stroke-width:1.4" cx="4.800000" cy="14.600000" r="2.300000"/><path class="ico" style="stroke-width:1.4" d="M6.800000 7.100000L19.400000 15.800000M6.800000 13.300000L10.400000 10.800000M13 9L19.400000 4.600000"/></svg>
<!-- sliders -->
<svg style="left:213.5px;top:566.4px" width="20" height="20"><path class="ico" d="M2.2 6.2H5.8M9.8 6.2H17.8M2.2 13.8H11.2M15.2 13.8H17.8"/><circle class="ico" cx="7.8" cy="6.2" r="2"/><circle class="ico" cx="13.2" cy="13.8" r="2"/></svg>
<!-- trash -->
<svg style="left:258.4px;top:565.3px" width="20" height="20"><path class="ico" style="stroke-width:1.5" d="M3 5H17M7.400000 2.400000H12.600000M4.500000 5.200000V17.800000H15.500000V5.200000"/></svg>
<!-- ruler -->
<div class="box" style="left:303px;top:549px;width:1332.5px;height:54px;border-radius:16px"></div>
<div id="ruler"><div class="t rl" style="left:302.0px;top:568px;width:60px;text-align:center;font-size:16.5px;color:#9b9b9b;transform-origin:50% 50%;transform:scaleX(1.1)">0</div>
<div class="t rl" style="left:396.0px;top:568px;width:60px;text-align:center;font-size:16.5px;color:#9b9b9b;transform-origin:50% 50%;transform:scaleX(1.1)">5s</div>
<div class="t rl" style="left:495.6px;top:568px;width:60px;text-align:center;font-size:16.5px;color:#9b9b9b;transform-origin:50% 50%;transform:scaleX(0.91)">10s</div>
<div class="t rl" style="left:598.0px;top:568px;width:60px;text-align:center;font-size:16.5px;color:#9b9b9b;transform-origin:50% 50%;transform:scaleX(0.91)">15s</div>
<div class="t rl" style="left:702.5px;top:568px;width:60px;text-align:center;font-size:16.5px;color:#9b9b9b;transform-origin:50% 50%;transform:scaleX(1.1)">20s</div>
<div class="t rl" style="left:809.7px;top:568px;width:60px;text-align:center;font-size:16.5px;color:#9b9b9b;transform-origin:50% 50%;transform:scaleX(1.1)">25s</div>
<div class="t rl" style="left:917.1px;top:568px;width:60px;text-align:center;font-size:16.5px;color:#9b9b9b;transform-origin:50% 50%;transform:scaleX(1.1)">30s</div>
<div class="t rl" style="left:1024.0px;top:568px;width:60px;text-align:center;font-size:16.5px;color:#9b9b9b;transform-origin:50% 50%;transform:scaleX(1.1)">35s</div>
<div class="t rl" style="left:1132.2px;top:568px;width:60px;text-align:center;font-size:16.5px;color:#9b9b9b;transform-origin:50% 50%;transform:scaleX(1.1)">40s</div>
<div class="t rl" style="left:1240.5px;top:568px;width:60px;text-align:center;font-size:16.5px;color:#9b9b9b;transform-origin:50% 50%;transform:scaleX(1.1)">45s</div>
<div class="t rl" style="left:1349.5px;top:568px;width:60px;text-align:center;font-size:16.5px;color:#9b9b9b;transform-origin:50% 50%;transform:scaleX(1.1)">50s</div>
<div class="t rl" style="left:1456.4px;top:568px;width:60px;text-align:center;font-size:16.5px;color:#9b9b9b;transform-origin:50% 50%;transform:scaleX(1.1)">55s</div>
<div class="t rl" style="left:1563.5px;top:568px;width:60px;text-align:center;font-size:16.5px;color:#9b9b9b;transform-origin:50% 50%;transform:scaleX(1.1)">60s</div>
<i class="abs" style="left:356.3px;top:578.8px;width:2px;height:3px;border-radius:1px;background:#8a8a8a"></i><i class="abs" style="left:367.3px;top:578.8px;width:2px;height:3px;border-radius:1px;background:#8a8a8a"></i><i class="abs" style="left:389.3px;top:578.8px;width:2px;height:3px;border-radius:1px;background:#8a8a8a"></i><i class="abs" style="left:400.3px;top:578.8px;width:2px;height:3px;border-radius:1px;background:#8a8a8a"></i><i class="abs" style="left:377.8px;top:576px;width:3px;height:6px;border-radius:1.5px;background:#8f8f8f"></i>
<i class="abs" style="left:452.6px;top:578.8px;width:2px;height:3px;border-radius:1px;background:#8a8a8a"></i><i class="abs" style="left:463.6px;top:578.8px;width:2px;height:3px;border-radius:1px;background:#8a8a8a"></i><i class="abs" style="left:485.6px;top:578.8px;width:2px;height:3px;border-radius:1px;background:#8a8a8a"></i><i class="abs" style="left:496.6px;top:578.8px;width:2px;height:3px;border-radius:1px;background:#8a8a8a"></i><i class="abs" style="left:474.1px;top:576px;width:3px;height:6px;border-radius:1.5px;background:#8f8f8f"></i>
<i class="abs" style="left:555.0px;top:578.8px;width:2px;height:3px;border-radius:1px;background:#8a8a8a"></i><i class="abs" style="left:566.0px;top:578.8px;width:2px;height:3px;border-radius:1px;background:#8a8a8a"></i><i class="abs" style="left:588.0px;top:578.8px;width:2px;height:3px;border-radius:1px;background:#8a8a8a"></i><i class="abs" style="left:599.0px;top:578.8px;width:2px;height:3px;border-radius:1px;background:#8a8a8a"></i><i class="abs" style="left:576.5px;top:576px;width:3px;height:6px;border-radius:1.5px;background:#8f8f8f"></i>
<i class="abs" style="left:658.0px;top:578.8px;width:2px;height:3px;border-radius:1px;background:#8a8a8a"></i><i class="abs" style="left:669.0px;top:578.8px;width:2px;height:3px;border-radius:1px;background:#8a8a8a"></i><i class="abs" style="left:691.0px;top:578.8px;width:2px;height:3px;border-radius:1px;background:#8a8a8a"></i><i class="abs" style="left:702.0px;top:578.8px;width:2px;height:3px;border-radius:1px;background:#8a8a8a"></i><i class="abs" style="left:679.5px;top:576px;width:3px;height:6px;border-radius:1.5px;background:#8f8f8f"></i>
<i class="abs" style="left:765.2px;top:578.8px;width:2px;height:3px;border-radius:1px;background:#8a8a8a"></i><i class="abs" style="left:776.2px;top:578.8px;width:2px;height:3px;border-radius:1px;background:#8a8a8a"></i><i class="abs" style="left:798.2px;top:578.8px;width:2px;height:3px;border-radius:1px;background:#8a8a8a"></i><i class="abs" style="left:809.2px;top:578.8px;width:2px;height:3px;border-radius:1px;background:#8a8a8a"></i><i class="abs" style="left:786.7px;top:576px;width:3px;height:6px;border-radius:1.5px;background:#8f8f8f"></i>
<i class="abs" style="left:872.5px;top:578.8px;width:2px;height:3px;border-radius:1px;background:#8a8a8a"></i><i class="abs" style="left:883.5px;top:578.8px;width:2px;height:3px;border-radius:1px;background:#8a8a8a"></i><i class="abs" style="left:905.5px;top:578.8px;width:2px;height:3px;border-radius:1px;background:#8a8a8a"></i><i class="abs" style="left:916.5px;top:578.8px;width:2px;height:3px;border-radius:1px;background:#8a8a8a"></i><i class="abs" style="left:894.0px;top:576px;width:3px;height:6px;border-radius:1.5px;background:#8f8f8f"></i>
<i class="abs" style="left:979.3px;top:578.8px;width:2px;height:3px;border-radius:1px;background:#8a8a8a"></i><i class="abs" style="left:990.3px;top:578.8px;width:2px;height:3px;border-radius:1px;background:#8a8a8a"></i><i class="abs" style="left:1012.3px;top:578.8px;width:2px;height:3px;border-radius:1px;background:#8a8a8a"></i><i class="abs" style="left:1023.3px;top:578.8px;width:2px;height:3px;border-radius:1px;background:#8a8a8a"></i><i class="abs" style="left:1000.8px;top:576px;width:3px;height:6px;border-radius:1.5px;background:#8f8f8f"></i>
<i class="abs" style="left:1086.7px;top:578.8px;width:2px;height:3px;border-radius:1px;background:#8a8a8a"></i><i class="abs" style="left:1097.7px;top:578.8px;width:2px;height:3px;border-radius:1px;background:#8a8a8a"></i><i class="abs" style="left:1119.7px;top:578.8px;width:2px;height:3px;border-radius:1px;background:#8a8a8a"></i><i class="abs" style="left:1130.7px;top:578.8px;width:2px;height:3px;border-radius:1px;background:#8a8a8a"></i><i class="abs" style="left:1108.2px;top:576px;width:3px;height:6px;border-radius:1.5px;background:#8f8f8f"></i>
<i class="abs" style="left:1195.4px;top:578.8px;width:2px;height:3px;border-radius:1px;background:#8a8a8a"></i><i class="abs" style="left:1206.4px;top:578.8px;width:2px;height:3px;border-radius:1px;background:#8a8a8a"></i><i class="abs" style="left:1228.4px;top:578.8px;width:2px;height:3px;border-radius:1px;background:#8a8a8a"></i><i class="abs" style="left:1239.4px;top:578.8px;width:2px;height:3px;border-radius:1px;background:#8a8a8a"></i><i class="abs" style="left:1216.9px;top:576px;width:3px;height:6px;border-radius:1.5px;background:#8f8f8f"></i>
<i class="abs" style="left:1304.1px;top:578.8px;width:2px;height:3px;border-radius:1px;background:#8a8a8a"></i><i class="abs" style="left:1315.1px;top:578.8px;width:2px;height:3px;border-radius:1px;background:#8a8a8a"></i><i class="abs" style="left:1337.1px;top:578.8px;width:2px;height:3px;border-radius:1px;background:#8a8a8a"></i><i class="abs" style="left:1348.1px;top:578.8px;width:2px;height:3px;border-radius:1px;background:#8a8a8a"></i><i class="abs" style="left:1325.6px;top:576px;width:3px;height:6px;border-radius:1.5px;background:#8f8f8f"></i>
<i class="abs" style="left:1410.9px;top:578.8px;width:2px;height:3px;border-radius:1px;background:#8a8a8a"></i><i class="abs" style="left:1421.9px;top:578.8px;width:2px;height:3px;border-radius:1px;background:#8a8a8a"></i><i class="abs" style="left:1443.9px;top:578.8px;width:2px;height:3px;border-radius:1px;background:#8a8a8a"></i><i class="abs" style="left:1454.9px;top:578.8px;width:2px;height:3px;border-radius:1px;background:#8a8a8a"></i><i class="abs" style="left:1432.4px;top:576px;width:3px;height:6px;border-radius:1.5px;background:#8f8f8f"></i>
<i class="abs" style="left:1518.0px;top:578.8px;width:2px;height:3px;border-radius:1px;background:#8a8a8a"></i><i class="abs" style="left:1529.0px;top:578.8px;width:2px;height:3px;border-radius:1px;background:#8a8a8a"></i><i class="abs" style="left:1551.0px;top:578.8px;width:2px;height:3px;border-radius:1px;background:#8a8a8a"></i><i class="abs" style="left:1562.0px;top:578.8px;width:2px;height:3px;border-radius:1px;background:#8a8a8a"></i><i class="abs" style="left:1539.5px;top:576px;width:3px;height:6px;border-radius:1.5px;background:#8f8f8f"></i>
</div>
<!-- TRACKS -->
<svg style="left:42px;top:672px" width="24" height="20"><rect x="1.7" y="4.8" width="14.6" height="10.6" rx="1.6" fill="none" stroke="#df5cf5" stroke-width="1.5"/><path d="M16.6 8.4L20.6 6V14.2L16.6 11.8" fill="none" stroke="#df5cf5" stroke-width="1.5" stroke-linejoin="round"/></svg>
<div class="t" id="tMedia" style="left:71.0px;top:674.6px;font-size:15.5px;color:#df5cf5;-webkit-text-stroke:0.3px #df5cf5;transform:scaleX(1.120)">Media</div>
<svg style="left:42px;top:772px" width="24" height="22"><path d="M1.8 7.6H5.4L10.6 3V18.6L5.4 14H1.8Z" fill="none" stroke="#1dd3a0" stroke-width="1.5" stroke-linejoin="round"/><path d="M5.4 7.6V14" stroke="#1dd3a0" stroke-width="1.3"/><path d="M13.6 8.2C14.8 9.6 14.8 12 13.6 13.4M16.6 6C19 8.6 19 13 16.6 15.6" fill="none" stroke="#1dd3a0" stroke-width="1.5" stroke-linecap="round"/></svg>
<div class="t" id="tAudio" style="left:72.0px;top:775.6px;font-size:15.5px;color:#1dd3a0;-webkit-text-stroke:0.3px #1dd3a0;transform:scaleX(1.097)">Audio</div>
<svg style="left:43px;top:873px" width="22" height="22"><path d="M3 6.2V3.6H17.400000V6.2M10.2 3.6V17M7.6 17H12.8" fill="none" stroke="#1f8cff" stroke-width="1.5"/></svg>
<div class="t" id="tText" style="left:72.0px;top:874.5px;font-size:15.5px;color:#1f8cff;-webkit-text-stroke:0.3px #1f8cff;transform:scaleX(1.075)">Text</div>
<div class="tbtn" style="left:165px;top:664.5px"></div>
<svg style="left:165px;top:664.5px" width="36" height="36"><circle cx="9" cy="18" r="1.5" fill="#fff"/><circle cx="18" cy="18" r="1.5" fill="#fff"/><circle cx="27" cy="18" r="1.5" fill="#fff"/></svg>
<div class="tbtn" style="left:207px;top:664.5px"></div>
<svg style="left:207px;top:664.5px" width="36" height="36"><rect class="ico" x="10.600000" y="15" width="14.8" height="11" rx="1"/><path class="ico" d="M13.8 15V12.6A4.2 4.2 0 0 1 22.2 12.6V15"/><rect x="17.1" y="19.6" width="1.8" height="1.8" fill="#fff"/></svg>
<div class="tbtn" style="left:165px;top:764.5px"></div>
<svg style="left:165px;top:764.5px" width="36" height="36"><circle cx="9" cy="18" r="1.5" fill="#fff"/><circle cx="18" cy="18" r="1.5" fill="#fff"/><circle cx="27" cy="18" r="1.5" fill="#fff"/></svg>
<div class="tbtn" style="left:207px;top:764.5px"></div>
<svg style="left:207px;top:764.5px" width="36" height="36"><rect class="ico" x="10.600000" y="15" width="14.8" height="11" rx="1"/><path class="ico" d="M13.8 15V12.6A4.2 4.2 0 0 1 22.2 12.6V15"/><rect x="17.1" y="19.6" width="1.8" height="1.8" fill="#fff"/></svg>
<div class="tbtn" style="left:165px;top:865px"></div>
<svg style="left:165px;top:865px" width="36" height="36"><circle cx="9" cy="18" r="1.5" fill="#fff"/><circle cx="18" cy="18" r="1.5" fill="#fff"/><circle cx="27" cy="18" r="1.5" fill="#fff"/></svg>
<div class="tbtn" style="left:207px;top:865px"></div>
<svg style="left:207px;top:865px" width="36" height="36"><rect class="ico" x="10.600000" y="15" width="14.8" height="11" rx="1"/><path class="ico" d="M13.8 15V12.6A4.2 4.2 0 0 1 22.2 12.6V15"/><rect x="17.1" y="19.6" width="1.8" height="1.8" fill="#fff"/></svg>
<div class="abs" id="trackArea" style="left:296px;top:630px;width:1339px;height:315px;overflow:hidden">
<div class="abs" style="left:7px;top:9px;width:328.5px;height:85.5px;border-radius:15px;background:#231823"></div>
<div class="abs" style="left:19px;top:13.299999999999955px;width:305px;height:76.8px;border-radius:9px;overflow:hidden;background:#0a1520"><svg width="305" height="77" viewBox="0 0 305 76.8" preserveAspectRatio="none">
<defs><linearGradient id="c1a" x1="0" y1="0" x2="0" y2="1"><stop offset="0" stop-color="#5a7b97"/><stop offset=".45" stop-color="#8aa6ba"/><stop offset=".69" stop-color="#b5c9d5"/><stop offset=".705" stop-color="#9db7c9"/><stop offset=".74" stop-color="#2b4763"/><stop offset=".85" stop-color="#0b1828"/><stop offset="1" stop-color="#03060c"/></linearGradient>
<linearGradient id="c1b" x1="0" y1="0" x2="1" y2="1"><stop offset="0" stop-color="#04070f"/><stop offset=".3" stop-color="#0a1322"/><stop offset=".5" stop-color="#41566d"/><stop offset=".68" stop-color="#9db4c4"/><stop offset="1" stop-color="#c0d3de"/></linearGradient>
<linearGradient id="c1c" x1="0" y1="0" x2="0" y2="1"><stop offset="0" stop-color="#05080f"/><stop offset=".25" stop-color="#05080f" stop-opacity=".85"/><stop offset=".6" stop-color="#05080f" stop-opacity="0"/></linearGradient>
<filter id="cb"><feGaussianBlur stdDeviation="1.2"/></filter></defs>
<rect width="151.6" height="76.8" fill="url(#c1a)"/>
<path d="M17,43.5 Q16,41.600000 19,41.600000 L94,41.600000 Q97,41.600000 96.500000,45 Q96,52 90,52.400000 Q84,52.600000 80,49.500000 L33,49.500000 Q28,52.800000 22,52.400000 Q17,51 17,43.500000Z" fill="#04060a"/>
<rect x="23" y="39" width="5" height="3" rx="1" fill="#04060a"/><rect x="85" y="39" width="5" height="3" rx="1" fill="#04060a"/>
<path d="M100.500000,44 Q100,41.600000 103,41.600000 L132,41.600000 Q136,42 136.600000,47 Q137,52 132,52.300000 L104,52.300000 Q101,52.500000 100.500000,50Z" fill="#04060a"/>
<rect x="109" y="39" width="5" height="3" rx="1" fill="#04060a"/><rect x="117" y="39" width="5" height="3" rx="1" fill="#04060a"/>
<ellipse cx="56" cy="57.500000" rx="36" ry="1.800000" fill="#04070d" opacity=".8" filter="url(#cb)"/><ellipse cx="118" cy="57.500000" rx="16" ry="1.800000" fill="#04070d" opacity=".8" filter="url(#cb)"/>
<rect x="151.6" width="153.4" height="76.8" fill="url(#c1b)"/>
<rect x="151.6" width="153.4" height="76.8" fill="url(#c1c)"/>
<rect x="151.2" width="1" height="76.8" fill="#231823"/>
<g transform="translate(151.6 0)">
<path d="M42,77 Q60,64 76,60 L82,50 L92,50 L96,58 Q104,62 108,77Z" fill="#04060b"/>
<ellipse cx="79" cy="28" rx="19" ry="21.500000" fill="#0a0f18"/>
<ellipse cx="74" cy="22" rx="12" ry="13" fill="#27384d" opacity=".6" filter="url(#cb)"/>
<path d="M86,36 L98,32 L97,50 L88,56 L80,50Z" fill="#070a10"/>
<path d="M66,40 Q76,46 72,58 Q66,70 58,77 L50,77 Q58,62 60,50Z" fill="#0b111b"/>
<path d="M84,30.500000 L103,31.500000 L102,35.500000 L96,36 L94,33.500000 L84,33Z" fill="#8d99a8"/>
<path d="M97,32 L102,32.500000 L101,37 L97,36.500000Z" fill="#3a1f22"/>
</g></svg></div>
<div class="hdl" style="left:11px;top:43px;background:#4b3d4b"></div>
<div class="hdl" style="left:329.5px;top:43px;background:#4b3d4b"></div>
<div class="abs" style="left:347.5px;top:9px;width:175.5px;height:85.5px;border-radius:15px;background:#211721"></div>
<div class="abs" style="left:359px;top:13.299999999999955px;width:152.3px;height:76.8px;border-radius:10px;background:#2a1a2c"></div>
<div class="hdl" style="left:352px;top:43px;background:#5d525d"></div>
<div class="hdl" style="left:517px;top:43px;background:#5d525d"></div>
<div class="abs" style="left:534.7px;top:9px;width:329.3px;height:85.5px;border-radius:15px;background:#e55cf8"></div>
<div class="abs" style="left:547.2px;top:13.299999999999955px;width:304.5px;height:76.8px;border-radius:9px;overflow:hidden;background:#27324d"><svg width="305" height="77" viewBox="0 0 304.5 76.8" preserveAspectRatio="none">
<defs><linearGradient id="c3a" x1="0" y1="0" x2="1" y2=".3"><stop offset="0" stop-color="#1c2438"/><stop offset=".5" stop-color="#2b3650"/><stop offset="1" stop-color="#3a4866"/></linearGradient><linearGradient id="c3v" x1="0" y1="0" x2="0" y2="1"><stop offset="0" stop-color="#8aa0c4" stop-opacity="0"/><stop offset=".35" stop-color="#8aa0c4" stop-opacity=".15"/><stop offset="1" stop-color="#8aa0c4" stop-opacity=".75"/></linearGradient>
<linearGradient id="c3b" x1="0" y1="0" x2="1" y2=".35"><stop offset="0" stop-color="#dde5f3"/><stop offset=".45" stop-color="#b5c8e6"/><stop offset="1" stop-color="#84a3d1"/></linearGradient>
<linearGradient id="c3s" x1="0" y1="0" x2="1" y2="1"><stop offset="0" stop-color="#5e4135"/><stop offset=".5" stop-color="#43291f"/><stop offset="1" stop-color="#2a1a16"/></linearGradient>
<linearGradient id="c3l" x1="0" y1="0" x2="0" y2="1"><stop offset="0" stop-color="#7e92bf"/><stop offset=".6" stop-color="#4a62a0"/><stop offset="1" stop-color="#0a1230"/></linearGradient>
<filter id="c3f"><feGaussianBlur stdDeviation="1"/></filter></defs>
<rect width="152" height="76.8" fill="url(#c3a)"/>
<rect width="152" height="76.8" fill="url(#c3v)"/>
<!-- jacket -->
<path d="M0,77 L2,70 L30,57 L42,66 L48,77Z M98,52 L106,45 L152,62 L152,77 L58,77 L90,62Z" fill="#4c6c9e"/>
<path d="M4,72 L28,60 L36,68 L20,77Z M110,52 L150,66 L150,77 L120,77Z" fill="#9db4d4" opacity=".45"/>
<path d="M92,44 L104,40 L108,58 L100,70 L78,77 L66,77Z" fill="#1b1410"/>
<!-- head -->
<path d="M39,2 Q50,-3 80,-2 Q112,-1 118,8 L116,18 L112,24 L110,40 L104,44 L96,54 L70,74 L50,77 L42,68 L37,52 L35,38 Q33,18 39,2Z" fill="url(#c3s)"/>
<path d="M40,1 Q52,-5 82,-3 Q114,-1 118,9 L116,16 Q108,6 94,3 Q70,-1 50,4Z" fill="#8f9092"/>
<path d="M101,24 Q112,22 112,32 Q110,42 103,43Z" fill="#3d2920"/>
<ellipse cx="70" cy="14" rx="22" ry="7" fill="#7a5646" opacity=".7" filter="url(#c3f)"/>
<ellipse cx="62" cy="46" rx="8" ry="5" fill="#6a4a3c" opacity=".8" filter="url(#c3f)"/>
<!-- beard -->
<path d="M36,44 Q44,50 52,50 Q66,58 82,52 Q90,50 94,46 Q95,54 88,60 L64,76 L46,76 Q39,66 36,44Z" fill="#a9aaab"/>
<path d="M38,50 Q48,48 59,54 Q56,61 46,62 Q40,60 38,50Z" fill="#3b2622"/>
<path d="M40,55 L56,56" stroke="#241512" stroke-width="1.2"/>
<!-- sunglasses -->
<path d="M29.700000,10.700000 Q33,6 37,7 L50,20 Q66,25 83,24 L112.500000,15.500000 L116.400000,17 L113,22 L86,33 L85,37 Q78,41 68,41 Q56,42 50,40 L45,31 L40,30 Q33,26 30,18Z" fill="#43474a"/>
<path d="M32,12 Q34,9 37,11 L48,23 L50,33 L43,30 Q35,25 32,12Z" fill="#1c2021"/>
<path d="M51,23 Q68,28 84,26.500000 L85,35 Q78,39.500000 68,39.500000 Q57,40 52,38.500000Z" fill="#262b2a"/>
<path d="M29.700000,10.700000 Q33,6 37,7 L50,20 Q66,25 83,24 L112.500000,15.500000" stroke="#6f7579" stroke-width=".9" fill="none"/>
<rect x="86.700000" y="25.600000" width="6.700000" height="3.600000" rx=".8" fill="#2f5fe0" transform="rotate(-14 90 27.400000)"/>
<!-- right image -->
<rect x="152" width="152.5" height="76.8" fill="url(#c3b)"/>
<rect x="151.500000" width="1.2" height="76.8" fill="#e9b6f5"/>
<g transform="translate(152 0)">
<path d="M45,0 Q40,1 36.500000,5 Q31,9 29.700000,16.800000 Q26.500000,23 28,29.700000 Q27.500000,37 31.200000,43.100000 Q33,50 37.700000,54.500000 Q41,60 46.300000,62 L52.800000,65.300000 L56,77 L100.200000,77 L101.700000,61 Q102.500000,58 104.500000,56.700000 L117.400000,49.100000 Q120,45 119.600000,41.600000 L117.400000,36.200000 L118,30.800000 L115.300000,25.400000 L116.300000,19 L112,12.500000 L99,0Z" fill="#070a14"/>
<g fill="#070a14"><circle cx="36" cy="6" r="2.500000"/><circle cx="31" cy="12" r="2.500000"/><circle cx="28.500000" cy="20" r="2.500000"/><circle cx="27" cy="27" r="2.500000"/><circle cx="27.500000" cy="34" r="2.500000"/><circle cx="29.500000" cy="41" r="2.500000"/><circle cx="32.500000" cy="48" r="2.500000"/><circle cx="36" cy="54" r="2.500000"/><circle cx="41" cy="59" r="2.500000"/><circle cx="47" cy="63" r="2"/></g>
<path d="M73.200000,0 L88.300000,0 L101.300000,8.200000 L99.100000,12.500000 L88.300000,10.300000 L79.700000,6Z" fill="url(#c3l)"/>
<path d="M73.200000,0 L79.700000,6 L88.300000,10.300000 L99.100000,12.500000 L98,15 L86,13 L76,8 L69,0Z" fill="#03050c"/>
<path d="M102.300000,8.200000 L114.200000,13.600000 L115.300000,19 L112,16.800000 L103.400000,12.500000Z" fill="#425a98"/>
<path d="M88.300000,0 L96,0 L104,7 L101.300000,8.200000Z" fill="#4a639d"/>
<ellipse cx="84" cy="22" rx="11" ry="4.500000" fill="#36559b" opacity=".85" filter="url(#c3f)" transform="rotate(-18 84 22)"/>
<ellipse cx="72" cy="6" rx="7" ry="3" fill="#2b4686" opacity=".7" filter="url(#c3f)" transform="rotate(-35 72 6)"/>
<path d="M50,32 Q46,36 48.500000,43 Q52,47 57,43" stroke="#7f95c4" stroke-width=".9" fill="none"/>
<path d="M106,35.500000 L116,37" stroke="#b8c6e2" stroke-width=".8"/>
</g></svg></div>
<div class="hdl" style="left:539.3px;top:43px;background:#3a1440"></div>
<div class="hdl" style="left:857.3px;top:43px;background:#3a1440"></div>
<div class="abs" style="left:875.5999999999999px;top:9px;width:480px;height:85.5px;border-radius:15px;background:#231823"></div>
<div class="abs" style="left:888px;top:13.299999999999955px;width:455px;height:76.8px;border-radius:9px;background:#2a1a2c"></div>
<div class="abs" style="left:1040.1px;top:13.299999999999955px;width:152px;height:76.8px;overflow:hidden;background:#a9c0cc"><svg width="152" height="77" viewBox="0 0 152 76.8" preserveAspectRatio="none">
<defs><linearGradient id="c4a" x1="0" y1="0" x2="1" y2="1"><stop offset="0" stop-color="#c6d7e0"/><stop offset=".45" stop-color="#a6bdc9"/><stop offset="1" stop-color="#758fa2"/></linearGradient>
<linearGradient id="c4s" x1="0" y1="0" x2="1" y2="0"><stop offset="0" stop-color="#3d5352"/><stop offset=".55" stop-color="#7d9592"/><stop offset="1" stop-color="#5a716f"/></linearGradient></defs>
<rect width="152" height="76.8" fill="url(#c4a)"/>
<!-- left woman -->
<path d="M30,0 L78,0 L76,14 L70,30 L62,50 L66,77 L28,77 L30,40Z" fill="#07090c"/>
<path d="M40,14 Q44,4 60,5 L76,10 L78,24 L76,30 L78,34 L74,38 L74,42 L66,45 L52,40 Q42,32 40,14Z" fill="url(#c4s)"/>
<path d="M30,0 L78,0 L77,10 L58,5 Q44,5 40,16 L38,30 L30,44Z" fill="#07090c"/>
<path d="M36,18 Q34,24 38,30 L40,22Z" fill="#5d7472"/>
<path d="M54,15 L84,17 L84,22 L80,26 L62,25 L56,20Z" fill="#3a1217"/>
<path d="M77,17 L84,17.500000 L84,22 L80,25.500000 L77,25.300000Z" fill="#c0565f" opacity=".95"/>
<path d="M40,17 L56,17.500000" stroke="#7a4a3a" stroke-width="1"/>
<path d="M70,34.500000 L78,33.500000 L75,38Z" fill="#33181c"/>
<path d="M14,77 Q22,62 40,56 L44,44 L62,46 L64,58 Q70,66 74,77Z" fill="#05070a"/>
<!-- right woman -->
<path d="M94,10 Q106,2 122,10 Q128,18 130,40 L134,77 L100,77 L104,60 L100,48 L92,46 L88,40 L90,36 L87,32 L90,26 L89,20Z" fill="#0a0d12"/>
<path d="M89,20 L92,14 L100,12 L102,30 L98,46 L92,46 L88,40 L90,36 L87,32 L90,26Z" fill="#171c21"/>
<path d="M88,21 L101,22 L100,28 L92,28Z" fill="#0b0e12"/>
<path d="M100,77 L104,60 L112,54 L128,58 L136,77Z" fill="#0d1118"/>
<path d="M112,56 Q124,58 128,77 L120,77Z" fill="#1b2733"/>
</svg></div>
<div class="hdl" style="left:879.7px;top:43px;background:#5d525d"></div>
<div class="abs" style="left:7px;top:109.5px;width:1350px;height:85.5px;border-radius:15px;background:#101b18"></div>
<div class="hdl" style="left:11.5px;top:144px;background:#3a4542"></div>
<svg style="left:0;top:0" width="1339" height="315"><rect x="31.15" y="145.8" width="2.5" height="12" rx="1.25" fill="#13d59c"/><rect x="37.19" y="135.3" width="2.5" height="33" rx="1.25" fill="#13d59c"/><rect x="43.24" y="140.3" width="2.5" height="23" rx="1.25" fill="#13d59c"/><rect x="49.28" y="145.8" width="2.5" height="12" rx="1.25" fill="#13d59c"/><rect x="55.33" y="142.8" width="2.5" height="18" rx="1.25" fill="#13d59c"/><rect x="61.38" y="145.8" width="2.5" height="12" rx="1.25" fill="#13d59c"/><rect x="67.42" y="135.3" width="2.5" height="33" rx="1.25" fill="#13d59c"/><rect x="73.46" y="140.3" width="2.5" height="23" rx="1.25" fill="#13d59c"/><rect x="79.51" y="145.8" width="2.5" height="12" rx="1.25" fill="#13d59c"/><rect x="85.55" y="142.8" width="2.5" height="18" rx="1.25" fill="#13d59c"/><rect x="91.60" y="142.8" width="2.5" height="18" rx="1.25" fill="#13d59c"/><rect x="97.64" y="145.8" width="2.5" height="12" rx="1.25" fill="#13d59c"/><rect x="103.69" y="140.3" width="2.5" height="23" rx="1.25" fill="#13d59c"/><rect x="109.73" y="135.3" width="2.5" height="33" rx="1.25" fill="#13d59c"/><rect x="115.78" y="145.8" width="2.5" height="12" rx="1.25" fill="#13d59c"/><rect x="121.82" y="142.8" width="2.5" height="18" rx="1.25" fill="#13d59c"/><rect x="127.87" y="145.8" width="2.5" height="12" rx="1.25" fill="#13d59c"/><rect x="133.91" y="140.3" width="2.5" height="23" rx="1.25" fill="#13d59c"/><rect x="139.96" y="135.3" width="2.5" height="33" rx="1.25" fill="#13d59c"/><rect x="146.00" y="145.8" width="2.5" height="12" rx="1.25" fill="#13d59c"/><rect x="152.05" y="142.8" width="2.5" height="18" rx="1.25" fill="#13d59c"/><rect x="158.09" y="145.8" width="2.5" height="12" rx="1.25" fill="#13d59c"/><rect x="164.14" y="140.3" width="2.5" height="23" rx="1.25" fill="#13d59c"/><rect x="170.18" y="135.3" width="2.5" height="33" rx="1.25" fill="#13d59c"/><rect x="176.23" y="145.8" width="2.5" height="12" rx="1.25" fill="#13d59c"/><rect x="182.27" y="142.8" width="2.5" height="18" rx="1.25" fill="#13d59c"/><rect x="188.32" y="145.8" width="2.5" height="12" rx="1.25" fill="#13d59c"/><rect x="194.37" y="140.3" width="2.5" height="23" rx="1.25" fill="#13d59c"/><rect x="200.41" y="135.3" width="2.5" height="33" rx="1.25" fill="#13d59c"/><rect x="206.45" y="145.8" width="2.5" height="12" rx="1.25" fill="#13d59c"/><rect x="212.50" y="142.8" width="2.5" height="18" rx="1.25" fill="#13d59c"/><rect x="218.54" y="145.8" width="2.5" height="12" rx="1.25" fill="#13d59c"/><rect x="224.59" y="140.3" width="2.5" height="23" rx="1.25" fill="#13d59c"/><rect x="230.63" y="135.3" width="2.5" height="33" rx="1.25" fill="#13d59c"/><rect x="236.68" y="145.8" width="2.5" height="12" rx="1.25" fill="#13d59c"/><rect x="242.72" y="142.8" width="2.5" height="18" rx="1.25" fill="#13d59c"/><rect x="248.77" y="145.8" width="2.5" height="12" rx="1.25" fill="#13d59c"/><rect x="254.81" y="140.3" width="2.5" height="23" rx="1.25" fill="#13d59c"/><rect x="260.86" y="135.3" width="2.5" height="33" rx="1.25" fill="#13d59c"/><rect x="266.90" y="145.8" width="2.5" height="12" rx="1.25" fill="#13d59c"/><rect x="272.95" y="142.8" width="2.5" height="18" rx="1.25" fill="#13d59c"/><rect x="279.00" y="145.8" width="2.5" height="12" rx="1.25" fill="#13d59c"/><rect x="285.04" y="140.3" width="2.5" height="23" rx="1.25" fill="#13d59c"/><rect x="291.09" y="135.3" width="2.5" height="33" rx="1.25" fill="#13d59c"/><rect x="297.13" y="145.8" width="2.5" height="12" rx="1.25" fill="#13d59c"/><rect x="303.17" y="142.8" width="2.5" height="18" rx="1.25" fill="#13d59c"/><rect x="309.22" y="145.8" width="2.5" height="12" rx="1.25" fill="#13d59c"/><rect x="315.26" y="140.3" width="2.5" height="23" rx="1.25" fill="#13d59c"/><rect x="321.31" y="135.3" width="2.5" height="33" rx="1.25" fill="#13d59c"/><rect x="327.36" y="145.8" width="2.5" height="12" rx="1.25" fill="#13d59c"/><rect x="333.40" y="142.8" width="2.5" height="18" rx="1.25" fill="#13d59c"/><rect x="339.44" y="145.8" width="2.5" height="12" rx="1.25" fill="#13d59c"/><rect x="345.49" y="140.3" width="2.5" height="23" rx="1.25" fill="#13d59c"/><rect x="351.53" y="135.3" width="2.5" height="33" rx="1.25" fill="#13d59c"/><rect x="357.58" y="145.8" width="2.5" height="12" rx="1.25" fill="#13d59c"/><rect x="363.62" y="142.8" width="2.5" height="18" rx="1.25" fill="#13d59c"/><rect x="369.67" y="145.8" width="2.5" height="12" rx="1.25" fill="#13d59c"/><rect x="375.71" y="140.3" width="2.5" height="23" rx="1.25" fill="#13d59c"/><rect x="381.76" y="135.3" width="2.5" height="33" rx="1.25" fill="#13d59c"/><rect x="387.80" y="145.8" width="2.5" height="12" rx="1.25" fill="#13d59c"/><rect x="393.85" y="142.8" width="2.5" height="18" rx="1.25" fill="#13d59c"/><rect x="399.89" y="145.8" width="2.5" height="12" rx="1.25" fill="#13d59c"/><rect x="405.94" y="140.3" width="2.5" height="23" rx="1.25" fill="#13d59c"/><rect x="411.98" y="135.3" width="2.5" height="33" rx="1.25" fill="#13d59c"/><rect x="418.03" y="145.8" width="2.5" height="12" rx="1.25" fill="#13d59c"/><rect x="424.08" y="142.8" width="2.5" height="18" rx="1.25" fill="#13d59c"/><rect x="430.12" y="145.8" width="2.5" height="12" rx="1.25" fill="#13d59c"/><rect x="436.16" y="140.3" width="2.5" height="23" rx="1.25" fill="#13d59c"/><rect x="442.21" y="135.3" width="2.5" height="33" rx="1.25" fill="#13d59c"/><rect x="448.25" y="145.8" width="2.5" height="12" rx="1.25" fill="#13d59c"/><rect x="454.30" y="142.8" width="2.5" height="18" rx="1.25" fill="#13d59c"/><rect x="460.35" y="145.8" width="2.5" height="12" rx="1.25" fill="#13d59c"/><rect x="466.39" y="140.3" width="2.5" height="23" rx="1.25" fill="#13d59c"/><rect x="472.43" y="135.3" width="2.5" height="33" rx="1.25" fill="#13d59c"/><rect x="478.48" y="145.8" width="2.5" height="12" rx="1.25" fill="#13d59c"/><rect x="484.52" y="142.8" width="2.5" height="18" rx="1.25" fill="#13d59c"/><rect x="490.57" y="145.8" width="2.5" height="12" rx="1.25" fill="#13d59c"/><rect x="496.62" y="140.3" width="2.5" height="23" rx="1.25" fill="#13d59c"/><rect x="502.66" y="135.3" width="2.5" height="33" rx="1.25" fill="#13d59c"/><rect x="508.70" y="145.8" width="2.5" height="12" rx="1.25" fill="#13d59c"/><rect x="514.75" y="142.8" width="2.5" height="18" rx="1.25" fill="#13d59c"/><rect x="520.79" y="145.8" width="2.5" height="12" rx="1.25" fill="#13d59c"/><rect x="526.84" y="140.3" width="2.5" height="23" rx="1.25" fill="#13d59c"/><rect x="532.88" y="135.3" width="2.5" height="33" rx="1.25" fill="#13d59c"/><rect x="538.93" y="145.8" width="2.5" height="12" rx="1.25" fill="#13d59c"/><rect x="544.98" y="142.8" width="2.5" height="18" rx="1.25" fill="#13d59c"/><rect x="551.02" y="145.8" width="2.5" height="12" rx="1.25" fill="#13d59c"/><rect x="557.06" y="140.3" width="2.5" height="23" rx="1.25" fill="#13d59c"/><rect x="563.11" y="135.3" width="2.5" height="33" rx="1.25" fill="#13d59c"/><rect x="569.15" y="145.8" width="2.5" height="12" rx="1.25" fill="#13d59c"/><rect x="575.20" y="142.8" width="2.5" height="18" rx="1.25" fill="#13d59c"/><rect x="581.25" y="145.8" width="2.5" height="12" rx="1.25" fill="#13d59c"/><rect x="587.29" y="140.3" width="2.5" height="23" rx="1.25" fill="#13d59c"/><rect x="593.33" y="135.3" width="2.5" height="33" rx="1.25" fill="#13d59c"/><rect x="599.38" y="145.8" width="2.5" height="12" rx="1.25" fill="#13d59c"/><rect x="605.42" y="142.8" width="2.5" height="18" rx="1.25" fill="#13d59c"/><rect x="611.47" y="145.8" width="2.5" height="12" rx="1.25" fill="#13d59c"/><rect x="617.51" y="140.3" width="2.5" height="23" rx="1.25" fill="#13d59c"/><rect x="623.56" y="135.3" width="2.5" height="33" rx="1.25" fill="#13d59c"/><rect x="629.61" y="145.8" width="2.5" height="12" rx="1.25" fill="#13d59c"/><rect x="635.65" y="142.8" width="2.5" height="18" rx="1.25" fill="#13d59c"/><rect x="641.69" y="145.8" width="2.5" height="12" rx="1.25" fill="#13d59c"/><rect x="647.74" y="140.3" width="2.5" height="23" rx="1.25" fill="#13d59c"/><rect x="653.78" y="135.3" width="2.5" height="33" rx="1.25" fill="#13d59c"/><rect x="659.83" y="145.8" width="2.5" height="12" rx="1.25" fill="#13d59c"/><rect x="665.88" y="142.8" width="2.5" height="18" rx="1.25" fill="#13d59c"/><rect x="671.92" y="145.8" width="2.5" height="12" rx="1.25" fill="#13d59c"/><rect x="677.96" y="140.3" width="2.5" height="23" rx="1.25" fill="#13d59c"/><rect x="684.01" y="135.3" width="2.5" height="33" rx="1.25" fill="#13d59c"/><rect x="690.05" y="145.8" width="2.5" height="12" rx="1.25" fill="#13d59c"/><rect x="696.10" y="142.8" width="2.5" height="18" rx="1.25" fill="#13d59c"/><rect x="702.14" y="145.8" width="2.5" height="12" rx="1.25" fill="#13d59c"/><rect x="708.19" y="140.3" width="2.5" height="23" rx="1.25" fill="#13d59c"/><rect x="714.24" y="135.3" width="2.5" height="33" rx="1.25" fill="#13d59c"/><rect x="720.28" y="145.8" width="2.5" height="12" rx="1.25" fill="#13d59c"/><rect x="726.32" y="142.8" width="2.5" height="18" rx="1.25" fill="#13d59c"/><rect x="732.37" y="145.8" width="2.5" height="12" rx="1.25" fill="#13d59c"/><rect x="738.41" y="140.3" width="2.5" height="23" rx="1.25" fill="#13d59c"/><rect x="744.46" y="135.3" width="2.5" height="33" rx="1.25" fill="#13d59c"/><rect x="750.51" y="145.8" width="2.5" height="12" rx="1.25" fill="#143d30"/><rect x="756.55" y="142.8" width="2.5" height="18" rx="1.25" fill="#143d30"/><rect x="762.59" y="145.8" width="2.5" height="12" rx="1.25" fill="#143d30"/><rect x="768.64" y="140.3" width="2.5" height="23" rx="1.25" fill="#143d30"/><rect x="774.68" y="135.3" width="2.5" height="33" rx="1.25" fill="#143d30"/><rect x="780.73" y="145.8" width="2.5" height="12" rx="1.25" fill="#143d30"/><rect x="786.78" y="142.8" width="2.5" height="18" rx="1.25" fill="#143d30"/><rect x="792.82" y="145.8" width="2.5" height="12" rx="1.25" fill="#143d30"/><rect x="798.87" y="140.3" width="2.5" height="23" rx="1.25" fill="#143d30"/><rect x="804.91" y="135.3" width="2.5" height="33" rx="1.25" fill="#143d30"/><rect x="810.95" y="145.8" width="2.5" height="12" rx="1.25" fill="#143d30"/><rect x="817.00" y="142.8" width="2.5" height="18" rx="1.25" fill="#143d30"/><rect x="823.05" y="145.8" width="2.5" height="12" rx="1.25" fill="#143d30"/><rect x="829.09" y="140.3" width="2.5" height="23" rx="1.25" fill="#143d30"/><rect x="835.13" y="135.3" width="2.5" height="33" rx="1.25" fill="#143d30"/><rect x="841.18" y="145.8" width="2.5" height="12" rx="1.25" fill="#143d30"/><rect x="847.22" y="142.8" width="2.5" height="18" rx="1.25" fill="#143d30"/><rect x="853.27" y="145.8" width="2.5" height="12" rx="1.25" fill="#143d30"/><rect x="859.32" y="140.3" width="2.5" height="23" rx="1.25" fill="#143d30"/><rect x="865.36" y="135.3" width="2.5" height="33" rx="1.25" fill="#143d30"/><rect x="871.40" y="145.8" width="2.5" height="12" rx="1.25" fill="#143d30"/><rect x="877.45" y="142.8" width="2.5" height="18" rx="1.25" fill="#143d30"/><rect x="883.49" y="145.8" width="2.5" height="12" rx="1.25" fill="#143d30"/><rect x="889.54" y="140.3" width="2.5" height="23" rx="1.25" fill="#143d30"/><rect x="895.59" y="135.3" width="2.5" height="33" rx="1.25" fill="#143d30"/><rect x="901.63" y="145.8" width="2.5" height="12" rx="1.25" fill="#143d30"/><rect x="907.67" y="142.8" width="2.5" height="18" rx="1.25" fill="#143d30"/><rect x="913.72" y="145.8" width="2.5" height="12" rx="1.25" fill="#143d30"/><rect x="919.76" y="140.3" width="2.5" height="23" rx="1.25" fill="#143d30"/><rect x="925.81" y="135.3" width="2.5" height="33" rx="1.25" fill="#143d30"/><rect x="931.86" y="145.8" width="2.5" height="12" rx="1.25" fill="#143d30"/><rect x="937.90" y="142.8" width="2.5" height="18" rx="1.25" fill="#143d30"/><rect x="943.94" y="145.8" width="2.5" height="12" rx="1.25" fill="#143d30"/><rect x="949.99" y="140.3" width="2.5" height="23" rx="1.25" fill="#143d30"/><rect x="956.03" y="135.3" width="2.5" height="33" rx="1.25" fill="#143d30"/><rect x="962.08" y="145.8" width="2.5" height="12" rx="1.25" fill="#143d30"/><rect x="968.12" y="142.8" width="2.5" height="18" rx="1.25" fill="#143d30"/><rect x="974.17" y="145.8" width="2.5" height="12" rx="1.25" fill="#143d30"/><rect x="980.21" y="140.3" width="2.5" height="23" rx="1.25" fill="#143d30"/><rect x="986.26" y="135.3" width="2.5" height="33" rx="1.25" fill="#143d30"/><rect x="992.30" y="145.8" width="2.5" height="12" rx="1.25" fill="#143d30"/><rect x="998.35" y="142.8" width="2.5" height="18" rx="1.25" fill="#143d30"/><rect x="1004.39" y="145.8" width="2.5" height="12" rx="1.25" fill="#143d30"/><rect x="1010.44" y="140.3" width="2.5" height="23" rx="1.25" fill="#143d30"/><rect x="1016.49" y="135.3" width="2.5" height="33" rx="1.25" fill="#143d30"/><rect x="1022.53" y="145.8" width="2.5" height="12" rx="1.25" fill="#143d30"/><rect x="1028.57" y="142.8" width="2.5" height="18" rx="1.25" fill="#143d30"/><rect x="1034.62" y="145.8" width="2.5" height="12" rx="1.25" fill="#143d30"/><rect x="1040.66" y="140.3" width="2.5" height="23" rx="1.25" fill="#143d30"/><rect x="1046.71" y="135.3" width="2.5" height="33" rx="1.25" fill="#143d30"/><rect x="1052.76" y="145.8" width="2.5" height="12" rx="1.25" fill="#143d30"/><rect x="1058.80" y="142.8" width="2.5" height="18" rx="1.25" fill="#143d30"/><rect x="1064.84" y="145.8" width="2.5" height="12" rx="1.25" fill="#143d30"/><rect x="1070.89" y="140.3" width="2.5" height="23" rx="1.25" fill="#143d30"/><rect x="1076.93" y="135.3" width="2.5" height="33" rx="1.25" fill="#143d30"/><rect x="1082.98" y="145.8" width="2.5" height="12" rx="1.25" fill="#143d30"/><rect x="1089.03" y="142.8" width="2.5" height="18" rx="1.25" fill="#143d30"/><rect x="1095.07" y="145.8" width="2.5" height="12" rx="1.25" fill="#143d30"/><rect x="1101.11" y="140.3" width="2.5" height="23" rx="1.25" fill="#143d30"/><rect x="1107.16" y="135.3" width="2.5" height="33" rx="1.25" fill="#143d30"/><rect x="1113.20" y="145.8" width="2.5" height="12" rx="1.25" fill="#143d30"/><rect x="1119.25" y="142.8" width="2.5" height="18" rx="1.25" fill="#143d30"/><rect x="1125.30" y="145.8" width="2.5" height="12" rx="1.25" fill="#143d30"/><rect x="1131.34" y="140.3" width="2.5" height="23" rx="1.25" fill="#143d30"/><rect x="1137.38" y="135.3" width="2.5" height="33" rx="1.25" fill="#143d30"/><rect x="1143.43" y="145.8" width="2.5" height="12" rx="1.25" fill="#143d30"/><rect x="1149.47" y="142.8" width="2.5" height="18" rx="1.25" fill="#143d30"/><rect x="1155.52" y="145.8" width="2.5" height="12" rx="1.25" fill="#143d30"/><rect x="1161.57" y="140.3" width="2.5" height="23" rx="1.25" fill="#143d30"/><rect x="1167.61" y="135.3" width="2.5" height="33" rx="1.25" fill="#143d30"/><rect x="1173.65" y="145.8" width="2.5" height="12" rx="1.25" fill="#143d30"/><rect x="1179.70" y="142.8" width="2.5" height="18" rx="1.25" fill="#143d30"/><rect x="1185.74" y="145.8" width="2.5" height="12" rx="1.25" fill="#143d30"/><rect x="1191.79" y="140.3" width="2.5" height="23" rx="1.25" fill="#143d30"/><rect x="1197.84" y="135.3" width="2.5" height="33" rx="1.25" fill="#143d30"/><rect x="1203.88" y="145.8" width="2.5" height="12" rx="1.25" fill="#143d30"/><rect x="1209.93" y="142.8" width="2.5" height="18" rx="1.25" fill="#143d30"/><rect x="1215.97" y="145.8" width="2.5" height="12" rx="1.25" fill="#143d30"/><rect x="1222.01" y="140.3" width="2.5" height="23" rx="1.25" fill="#143d30"/><rect x="1228.06" y="135.3" width="2.5" height="33" rx="1.25" fill="#143d30"/><rect x="1234.11" y="145.8" width="2.5" height="12" rx="1.25" fill="#143d30"/><rect x="1240.15" y="142.8" width="2.5" height="18" rx="1.25" fill="#143d30"/><rect x="1246.20" y="145.8" width="2.5" height="12" rx="1.25" fill="#143d30"/><rect x="1252.24" y="140.3" width="2.5" height="23" rx="1.25" fill="#143d30"/><rect x="1258.28" y="135.3" width="2.5" height="33" rx="1.25" fill="#143d30"/><rect x="1264.33" y="145.8" width="2.5" height="12" rx="1.25" fill="#143d30"/><rect x="1270.38" y="142.8" width="2.5" height="18" rx="1.25" fill="#143d30"/><rect x="1276.42" y="145.8" width="2.5" height="12" rx="1.25" fill="#143d30"/><rect x="1282.47" y="140.3" width="2.5" height="23" rx="1.25" fill="#143d30"/><rect x="1288.51" y="135.3" width="2.5" height="33" rx="1.25" fill="#143d30"/><rect x="1294.55" y="145.8" width="2.5" height="12" rx="1.25" fill="#143d30"/><rect x="1300.60" y="142.8" width="2.5" height="18" rx="1.25" fill="#143d30"/><rect x="1306.64" y="145.8" width="2.5" height="12" rx="1.25" fill="#143d30"/><rect x="1312.69" y="140.3" width="2.5" height="23" rx="1.25" fill="#143d30"/><rect x="1318.74" y="135.3" width="2.5" height="33" rx="1.25" fill="#143d30"/><rect x="1324.78" y="145.8" width="2.5" height="12" rx="1.25" fill="#143d30"/><rect x="1330.82" y="142.8" width="2.5" height="18" rx="1.25" fill="#143d30"/><rect x="1336.87" y="145.8" width="2.5" height="12" rx="1.25" fill="#143d30"/></svg>
<div class="abs" style="left:7px;top:210px;width:420px;height:85.5px;border-radius:16px;background:#10171e"></div>
<div class="abs" style="left:30.80000000000001px;top:243.20000000000005px;width:372.3px;height:19px;border-radius:9.5px;background:#0f1f2c"></div>
<div class="hdl" style="left:11.5px;top:244.5px;background:#46505a"></div>
<div class="hdl" style="left:421px;top:244.5px;background:#46505a"></div>
<div class="abs" style="left:439px;top:210px;width:505.8px;height:85.6px;border-radius:17px;background:#0783ff"></div>
<div class="abs" style="left:450.9px;top:214.29999999999995px;width:481.7px;height:77px;border-radius:11px;background:#2c97ff"></div>
<div class="hdl" style="left:443.20000000000005px;top:244.5px;background:#06244a"></div>
<div class="hdl" style="left:938.5px;top:244.5px;background:#06244a"></div>
<div class="t" id="tClip" style="left:487.8px;top:246.3px;font-size:16.3px;transform:scaleX(0.947)">OWN YOUR MOMENT, INSPIRE THE FUTURE OF STYLE</div>
<div class="abs" style="left:956.3px;top:210px;width:420px;height:85.5px;border-radius:16px;background:#10171e"></div>
<div class="abs" style="left:980.2px;top:243.20000000000005px;width:400px;height:19px;border-radius:9.5px;background:#0f1f2c"></div>
<div class="hdl" style="left:961px;top:244.5px;background:#46505a"></div>
</div>
<div class="abs" style="left:1047.6px;top:560px;width:1.6px;height:385px;background:#e55cf8"></div>
<svg style="left:1035.5px;top:531px" width="26" height="42"><path d="M0.3 5Q0.3 0.8 4.500000 0.8H21Q25.3 0.8 25.3 5V31.5L14.4 40.4Q12.8 41.6 11.2 40.4L0.3 31.500000Z" fill="#e55cf8"/></svg>
<div class="abs" style="left:1015.5px;top:481.3px;width:66.3px;height:42.5px;border-radius:21.25px;background:#e55cf8"></div>
<div class="t" id="tBadge" style="left:1034px;top:494.3px;font-size:16.5px;color:#fff;transform:scaleX(1.07)">35s</div>
<div class="abs" id="bottomstrip" style="left:0;top:943.6px;width:1671px;height:1.4px;background:#fff"></div>
</body>
</html>
